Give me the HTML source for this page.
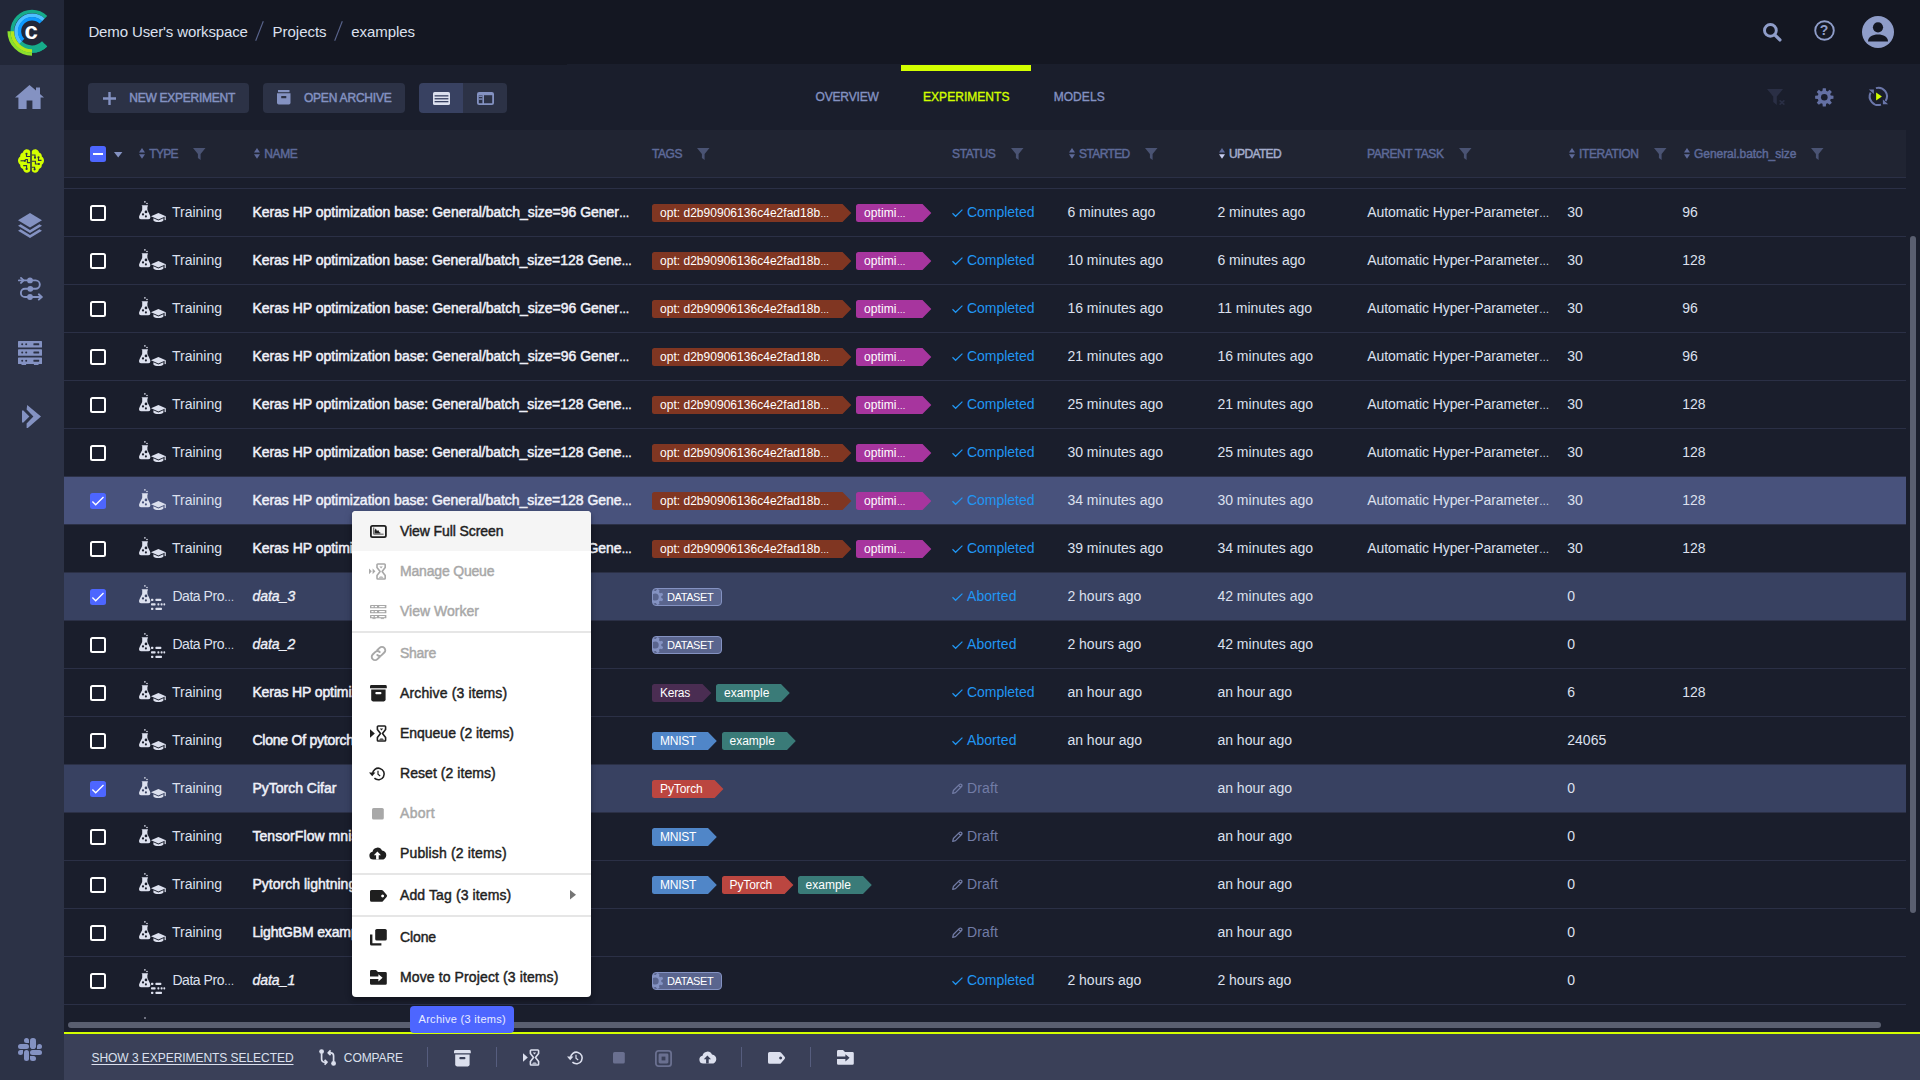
<!DOCTYPE html>
<html lang="en"><head><meta charset="utf-8"><title>ClearML - examples</title><style>
*{box-sizing:border-box;margin:0;padding:0}
html,body{width:1920px;height:1080px;overflow:hidden;background:#1a1e2c;font-family:"Liberation Sans",sans-serif}
.t{position:absolute;white-space:pre;line-height:20px;height:20px}
.b{position:absolute}
.i{position:absolute;overflow:visible}
.e{font-size:.74em;letter-spacing:0}
</style></head>
<body>
<div class="b " style="left:0px;top:0px;width:1920px;height:64px;background:#141722;"></div>
<div class="b " style="left:0px;top:64px;width:567px;height:1px;background:#141722;"></div>
<div class="b " style="left:0px;top:0px;width:64px;height:1080px;background:#2c3246;"></div>
<div class="b " style="left:0px;top:0px;width:64px;height:65px;background:#222738;"></div>
<svg class="i" style="left:0;top:0" width="64" height="64" viewBox="0 0 64 64"><path d="M45.97 45.17 A19.75 19.75 0 1 1 45.97 17.23" fill="none" stroke="#16ac8a" stroke-width="3.6"/><path d="M44.62 43.82 A17.85 17.85 0 0 1 19.16 43.60" fill="none" stroke="#16ac8a" stroke-width="7.3"/><path d="M20.62 42.58 A16.1 16.1 0 0 1 43.38 19.82" fill="none" stroke="#4dc0ff" stroke-width="3.9"/><path d="M23.16 40.04 A12.5 12.5 0 0 1 40.84 22.36" fill="none" stroke="#0d99ff" stroke-width="3.4"/><path d="M32.00 50.95 A19.75 19.75 0 0 1 12.25 31.20" fill="none" stroke="#b2e61c" stroke-width="3.6"/><path d="M32.00 54.20 A23 23 0 0 1 9.00 31.20" fill="none" stroke="#8be02c" stroke-width="3.1"/></svg>
<div class="t" style="left:24.6px;top:16.6px;font-size:24px;font-weight:700;color:#fff;line-height:28px;height:28px">c</div>
<svg class="i" style="left:15.2px;top:85px;" width="29" height="24" viewBox="0 0 29 24"><path fill="#8492c2" d="M14.5 0 L0 12.6 H3.4 V24 H11.6 V15.4 H17.4 V24 H25.6 V12.6 H29 L25 9.1 V2.4 H21 V5.6 Z"/></svg>
<svg class="i" style="left:17.6px;top:148.6px;" width="26" height="24" viewBox="0 0 26 24"><g fill="#d3ff00"><path d="M12.2 2.6 C11.6 .9 9.9 0 8.2 .3 C6.4 .6 5.2 1.9 5 3.6 C3.2 4 2 5.6 2.2 7.4 C.8 8.3 0 9.8 0 11.6 C0 13.4 .9 14.9 2.2 15.8 C2 17.8 3.2 19.5 5 20 C5.3 22.2 7 23.8 9 23.8 C10.6 23.8 11.8 22.9 12.2 21.6 Z"/>
<path d="M13.8 2.6 C14.4 .9 16.1 0 17.8 .3 C19.6 .6 20.8 1.9 21 3.6 C22.8 4 24 5.6 23.8 7.4 C25.2 8.3 26 9.8 26 11.6 C26 13.4 25.1 14.9 23.8 15.8 C24 17.8 22.8 19.5 21 20 C20.7 22.2 19 23.8 17 23.8 C15.4 23.8 14.2 22.9 13.8 21.6 Z"/></g>
<g fill="none" stroke="#2c3246" stroke-width="1.1"><path d="M12.2 7.5 H8.5 V5.2"/><path d="M2.5 11.8 H6.6"/><path d="M12.2 13.6 H9.4 V10.5 H7.2"/><path d="M8.6 19.6 V16.6 H5.2"/>
<path d="M13.8 6 H17 V8.4"/><path d="M23.5 11.4 H20.5 V8.6"/><path d="M13.8 12.2 H17.4 V15 H20.6"/><path d="M13.8 18.2 H16.6 V20"/></g>
<g fill="#2c3246"><circle cx="8.5" cy="4.8" r="1.1"/><circle cx="6.9" cy="11.8" r="1.1"/><circle cx="7" cy="10.5" r="0"/><circle cx="8.6" cy="19.9" r="1.1"/><circle cx="17" cy="8.7" r="1.1"/><circle cx="20.5" cy="8.3" r="1.1"/><circle cx="20.9" cy="15" r="1.1"/><circle cx="16.6" cy="20.3" r="1.1"/></g></svg>
<svg class="i" style="left:18.3px;top:212.8px;" width="24" height="25" viewBox="0 0 24 25"><g fill="#8492c2"><path d="M12 0 L24 7.2 L12 14.4 L0 7.2 Z"/><path d="M2.6 11.3 L0 12.8 L12 20 L24 12.8 L21.4 11.3 L12 17 Z"/><path d="M2.6 16.3 L0 17.8 L12 25 L24 17.8 L21.4 16.3 L12 22 Z"/></g></svg>
<svg class="i" style="left:17.5px;top:277.4px;" width="25" height="23" viewBox="0 0 25 23"><g fill="none" stroke="#8492c2" stroke-width="1.9" stroke-linecap="round" stroke-linejoin="round">
<path d="M.9 3.4 H17.6 a4.2 4.2 0 0 1 0 8.4 H7 a4.1 4.1 0 0 0 0 8.2 H23.5"/>
<path d="M3 .9 L5.6 3.4 L3 5.9"/><path d="M20.8 17.3 L23.7 20 L20.8 22.6"/></g>
<g fill="#8492c2"><circle cx="12" cy="3.4" r="2.9"/><circle cx="12.3" cy="11.8" r="2.9"/><circle cx="12" cy="20" r="2.9"/></g></svg>
<svg class="i" style="left:18px;top:340.8px;" width="24" height="24" viewBox="0 0 24 24"><g fill="#8492c2"><rect x="0" y="0" width="24" height="6.6" rx=".6"/><rect x="0" y="8.2" width="24" height="6.6" rx=".6"/><rect x="0" y="16.4" width="24" height="6.6" rx=".6"/><rect x="3.5" y="22.6" width="4.6" height="1.4"/><rect x="15.9" y="22.6" width="4.6" height="1.4"/></g><g fill="#2c3246"><circle cx="4.2" cy="3.3" r="1"/><circle cx="8.2" cy="3.3" r="1"/><rect x="15.4" y="2.3" width="5.8" height="2" rx=".4"/><circle cx="4.2" cy="11.5" r="1"/><circle cx="8.2" cy="11.5" r="1"/><rect x="15.4" y="10.5" width="5.8" height="2" rx=".4"/><circle cx="4.2" cy="19.7" r="1"/><circle cx="8.2" cy="19.7" r="1"/><rect x="15.4" y="18.7" width="5.8" height="2" rx=".4"/></g></svg>
<svg class="i" style="left:21.8px;top:405.4px;" width="19" height="23" viewBox="0 0 19 23"><g fill="#8492c2"><path d="M5.2 0 L19 11.4 L5.8 23 L4.6 23 L4.6 18.6 L11.4 11.4 L4.6 4.6 Z"/><path d="M0 5.6 L1.4 5.6 L7.4 11.4 L1.4 17.6 L0 17.6 Z"/></g></svg>
<div class="b" style="left:30px;top:1037.8px;width:5.6px;height:11.1px;background:#8492c2;border-radius:2.8px"></div>
<div class="b" style="left:24px;top:1037.8px;width:5.4px;height:5.2px;background:#8492c2;border-radius:2.6px 2.6px 0 2.6px"></div>
<div class="b" style="left:18px;top:1043.8999999999999px;width:11.4px;height:5px;background:#8492c2;border-radius:2.5px"></div>
<div class="b" style="left:18px;top:1050.0px;width:5.3px;height:5px;background:#8492c2;border-radius:2.5px 0 2.5px 2.5px"></div>
<div class="b" style="left:24px;top:1050.0px;width:5.4px;height:11.1px;background:#8492c2;border-radius:2.7px"></div>
<div class="b" style="left:30.2px;top:1055.8999999999999px;width:5.4px;height:5.2px;background:#8492c2;border-radius:0 2.6px 2.6px 2.6px"></div>
<div class="b" style="left:30.2px;top:1050.0px;width:11.7px;height:5px;background:#8492c2;border-radius:2.5px"></div>
<div class="b" style="left:36.5px;top:1043.8999999999999px;width:5.4px;height:5px;background:#8492c2;border-radius:2.5px 2.5px 2.5px 0"></div>
<div class="t " style="left:88.4px;top:21.5px;font-size:15px;color:#dce0ee;letter-spacing:-0.128px;">Demo User&#x27;s workspace</div>
<div class="t " style="left:272.6px;top:21.5px;font-size:15px;color:#dce0ee;letter-spacing:-0.023px;">Projects</div>
<div class="t " style="left:351.3px;top:21.5px;font-size:15px;color:#dce0ee;letter-spacing:-0.062px;">examples</div>
<svg class="i" style="left:255px;top:21px;" width="9" height="20" viewBox="0 0 9 20"><path d="M8.3 .3 L.7 19.7" stroke="#5a658e" stroke-width="1.1"/></svg>
<svg class="i" style="left:334px;top:21px;" width="9" height="20" viewBox="0 0 9 20"><path d="M8.3 .3 L.7 19.7" stroke="#5a658e" stroke-width="1.1"/></svg>
<svg class="i" style="left:1762.6px;top:22.6px;" width="19" height="19" viewBox="0 0 19 19"><circle cx="7.4" cy="7.4" r="5.9" fill="none" stroke="#8f9dc9" stroke-width="2.9"/><path d="M11.8 11.8 L16.9 16.9" stroke="#8f9dc9" stroke-width="3.3" stroke-linecap="round"/></svg>
<svg class="i" style="left:1813.5px;top:19.7px;" width="21" height="21" viewBox="0 0 21 21"><circle cx="10.5" cy="10.5" r="9.3" fill="none" stroke="#8f9dc9" stroke-width="1.9"/></svg>
<div class="t" style="left:1819.7px;top:20.3px;font-size:14px;font-weight:700;color:#8f9dc9">?</div>
<svg class="i" style="left:1862px;top:16px;" width="32" height="32" viewBox="0 0 32 32"><circle cx="16" cy="16" r="16" fill="#8f9dc9"/><circle cx="16" cy="11.3" r="5.1" fill="#141722"/><path d="M6 25.4 C6 20.6 10.5 18.4 16 18.4 C21.5 18.4 26 20.6 26 25.4 Z" fill="#141722"/></svg>
<div class="b " style="left:88px;top:83px;width:161px;height:30px;background:#2c3246;border-radius:4px"></div>
<svg class="i" style="left:102.5px;top:91.5px;" width="13" height="13" viewBox="0 0 13 13"><path d="M5.3 0 H7.7 V5.3 H13 V7.7 H7.7 V13 H5.3 V7.7 H0 V5.3 H5.3 Z" fill="#8492c2"/></svg>
<div class="t " style="left:129.3px;top:88.1px;font-size:12px;color:#8492c2;letter-spacing:-0.253px;-webkit-text-stroke:0.45px #8492c2;">NEW EXPERIMENT</div>
<div class="b " style="left:263px;top:83px;width:142px;height:30px;background:#2c3246;border-radius:4px"></div>
<svg class="i" style="left:277px;top:90.4px;" width="13.5" height="14.5" viewBox="0 0 13.5 14.5"><path d="M1 0 H12.5 V2.2 H1 Z" fill="#8492c2"/><path d="M0 3.3 H13.5 V12.8 a1.7 1.7 0 0 1 -1.7 1.7 H1.7 a1.7 1.7 0 0 1 -1.7 -1.7 Z" fill="#8492c2"/><rect x="4.2" y="6" width="5.1" height="2.2" rx=".5" fill="#2c3246"/></svg>
<div class="t " style="left:303.9px;top:88.1px;font-size:12px;color:#8492c2;letter-spacing:-0.194px;-webkit-text-stroke:0.45px #8492c2;">OPEN ARCHIVE</div>
<div class="b " style="left:419px;top:83px;width:44px;height:30px;background:#384161;border-radius:4px 0 0 4px"></div>
<div class="b " style="left:463px;top:83px;width:44px;height:30px;background:#2c3246;border-radius:0 4px 4px 0"></div>
<svg class="i" style="left:433px;top:91.8px;" width="17" height="13" viewBox="0 0 17 13"><rect x="0" y="0" width="17" height="13" rx="1.6" fill="#dce0ee"/><g fill="#384161"><rect x="1.6" y="3.2" width="13.8" height="1.3"/><rect x="1.6" y="6.1" width="13.8" height="1.3"/><rect x="1.6" y="9" width="13.8" height="1.3"/></g></svg>
<svg class="i" style="left:477px;top:91.8px;" width="17" height="13" viewBox="0 0 17 13"><rect x=".9" y=".9" width="15.2" height="11.2" rx="1.2" fill="none" stroke="#8492c2" stroke-width="1.8"/><rect x="5.4" y="1" width="1.6" height="11" fill="#8492c2"/><rect x="1" y="3" width="15" height="1.4" fill="#8492c2" opacity="0"/><rect x="1.8" y="3.6" width="3.6" height="1.3" fill="#8492c2"/><rect x="1.8" y="6.4" width="3.6" height="1.3" fill="#8492c2"/><rect x="1" y="1" width="15" height="2.2" fill="#8492c2"/></svg>
<div class="b " style="left:901px;top:65px;width:130px;height:6px;background:#d3ff00;"></div>
<div class="t " style="left:815.5px;top:86.6px;font-size:12px;color:#8492c2;letter-spacing:-0.158px;-webkit-text-stroke:0.35px #8492c2;">OVERVIEW</div>
<div class="t " style="left:923px;top:86.6px;font-size:12px;color:#d3ff00;letter-spacing:0.044px;-webkit-text-stroke:0.35px #d3ff00;">EXPERIMENTS</div>
<div class="t " style="left:1053.7px;top:86.6px;font-size:12px;color:#8492c2;letter-spacing:0.053px;-webkit-text-stroke:0.35px #8492c2;">MODELS</div>
<svg class="i" style="left:1767px;top:89px;" width="18" height="16" viewBox="0 0 18 16"><path d="M0 0 H16 L9.8 7.6 V16 L6.2 13 V7.6 Z" fill="#2a2f45"/><path d="M12.6 11.4 L17.4 15.6 M17.4 11.4 L12.6 15.6" stroke="#2a2f45" stroke-width="1.5"/></svg>
<svg class="i" style="left:1814.7px;top:88px;" width="18.6" height="18.6" viewBox="0 0 18.6 18.6"><path d="M18.47 7.77 L18.47 10.83 L15.75 11.12 L15.15 12.57 L16.87 14.71 L14.71 16.87 L12.57 15.15 L11.12 15.75 L10.83 18.47 L7.77 18.47 L7.48 15.75 L6.03 15.15 L3.89 16.87 L1.73 14.71 L3.45 12.57 L2.85 11.12 L0.13 10.83 L0.13 7.77 L2.85 7.48 L3.45 6.03 L1.73 3.89 L3.89 1.73 L6.03 3.45 L7.48 2.85 L7.77 0.13 L10.83 0.13 L11.12 2.85 L12.57 3.45 L14.71 1.73 L16.87 3.89 L15.15 6.03 L15.75 7.48 Z" fill="#6470a3"/><circle cx="9.3" cy="9.3" r="3.3" fill="#1a1e2c"/></svg>
<svg class="i" style="left:1868px;top:86.1px;" width="21" height="21" viewBox="0 0 21 21"><g fill="none" stroke="#6b77aa" stroke-width="2"><path d="M7.93 2.13 A8.6 8.6 0 0 1 17.59 14.96"/><path d="M12.96 18.58 A8.6 8.6 0 0 1 2.57 6.63"/></g>
<path d="M14.9 13.4 V18.3 H20.1 Z" fill="#6b77aa"/><path d="M.8 3.5 H5.9 V8 Z" fill="#6b77aa"/>
<path d="M8.1 6.4 L13.9 10.4 L8.1 14.4 Z" fill="#d3ff00"/></svg>
<div class="b " style="left:64px;top:130px;width:1842px;height:48px;background:#202432;"></div>
<div class="b " style="left:64px;top:177px;width:1842px;height:1px;background:#2b3046;"></div>
<div class="b" style="left:90px;top:146px;width:16px;height:16px;background:#4d66ff;border-radius:2.5px"></div>
<div class="b " style="left:93px;top:153.2px;width:10px;height:1.6px;background:#fff;"></div>
<svg class="i" style="left:113.7px;top:152.1px;" width="8.4" height="5.6" viewBox="0 0 8.4 5.6"><path d="M0 0 H8.4 L4.2 5.6 Z" fill="#8492c2"/></svg>
<svg class="i" style="left:138.70000000000002px;top:148.2px;" width="6" height="10.8" viewBox="0 0 6 10.8"><path d="M0 4.6 L3 0 L6 4.6 Z" fill="#5e6a99"/><path d="M0 6.2 L3 10.8 L6 6.2 Z" fill="#5e6a99"/></svg>
<div class="t " style="left:149.20000000000002px;top:143.6px;font-size:12px;color:#5e6a99;letter-spacing:-0.636px;-webkit-text-stroke:0.45px #5e6a99;">TYPE</div>
<svg class="i" style="left:192.5px;top:147.8px;" width="12.5" height="12" viewBox="0 0 12.5 12"><path d="M0 0 H12.5 L7.6 6 V12 L4.9 10 V6 Z" fill="#4a5373"/></svg>
<svg class="i" style="left:253.70000000000002px;top:148.2px;" width="6" height="10.8" viewBox="0 0 6 10.8"><path d="M0 4.6 L3 0 L6 4.6 Z" fill="#5e6a99"/><path d="M0 6.2 L3 10.8 L6 6.2 Z" fill="#5e6a99"/></svg>
<div class="t " style="left:264.2px;top:143.6px;font-size:12px;color:#5e6a99;letter-spacing:-0.343px;-webkit-text-stroke:0.45px #5e6a99;">NAME</div>
<div class="t " style="left:652px;top:143.6px;font-size:12px;color:#5e6a99;letter-spacing:-0.446px;-webkit-text-stroke:0.45px #5e6a99;">TAGS</div>
<svg class="i" style="left:697px;top:147.8px;" width="12.5" height="12" viewBox="0 0 12.5 12"><path d="M0 0 H12.5 L7.6 6 V12 L4.9 10 V6 Z" fill="#4a5373"/></svg>
<div class="t " style="left:952px;top:143.6px;font-size:12px;color:#5e6a99;letter-spacing:-0.343px;-webkit-text-stroke:0.45px #5e6a99;">STATUS</div>
<svg class="i" style="left:1011px;top:147.8px;" width="12.5" height="12" viewBox="0 0 12.5 12"><path d="M0 0 H12.5 L7.6 6 V12 L4.9 10 V6 Z" fill="#4a5373"/></svg>
<svg class="i" style="left:1068.6px;top:148.2px;" width="6" height="10.8" viewBox="0 0 6 10.8"><path d="M0 4.6 L3 0 L6 4.6 Z" fill="#5e6a99"/><path d="M0 6.2 L3 10.8 L6 6.2 Z" fill="#5e6a99"/></svg>
<div class="t " style="left:1079.1px;top:143.6px;font-size:12px;color:#5e6a99;letter-spacing:-0.628px;-webkit-text-stroke:0.45px #5e6a99;">STARTED</div>
<svg class="i" style="left:1144.5px;top:147.8px;" width="12.5" height="12" viewBox="0 0 12.5 12"><path d="M0 0 H12.5 L7.6 6 V12 L4.9 10 V6 Z" fill="#4a5373"/></svg>
<svg class="i" style="left:1218.6px;top:148.2px;" width="6" height="10.8" viewBox="0 0 6 10.8"><path d="M0 4.6 L3 0 L6 4.6 Z" fill="#5e6a99"/><path d="M0 6.2 L3 10.8 L6 6.2 Z" fill="#c8cef0"/></svg>
<div class="t " style="left:1229.1px;top:143.6px;font-size:12px;color:#a4adcd;letter-spacing:-0.650px;-webkit-text-stroke:0.45px #a4adcd;">UPDATED</div>
<div class="t " style="left:1367px;top:143.6px;font-size:12px;color:#5e6a99;letter-spacing:-0.422px;-webkit-text-stroke:0.45px #5e6a99;">PARENT TASK</div>
<svg class="i" style="left:1458.5px;top:147.8px;" width="12.5" height="12" viewBox="0 0 12.5 12"><path d="M0 0 H12.5 L7.6 6 V12 L4.9 10 V6 Z" fill="#4a5373"/></svg>
<svg class="i" style="left:1568.6px;top:148.2px;" width="6" height="10.8" viewBox="0 0 6 10.8"><path d="M0 4.6 L3 0 L6 4.6 Z" fill="#5e6a99"/><path d="M0 6.2 L3 10.8 L6 6.2 Z" fill="#5e6a99"/></svg>
<div class="t " style="left:1579.1px;top:143.6px;font-size:12px;color:#5e6a99;letter-spacing:-0.412px;-webkit-text-stroke:0.45px #5e6a99;">ITERATION</div>
<svg class="i" style="left:1653.5px;top:147.8px;" width="12.5" height="12" viewBox="0 0 12.5 12"><path d="M0 0 H12.5 L7.6 6 V12 L4.9 10 V6 Z" fill="#4a5373"/></svg>
<svg class="i" style="left:1683.6px;top:148.2px;" width="6" height="10.8" viewBox="0 0 6 10.8"><path d="M0 4.6 L3 0 L6 4.6 Z" fill="#5e6a99"/><path d="M0 6.2 L3 10.8 L6 6.2 Z" fill="#5e6a99"/></svg>
<div class="t " style="left:1694.1px;top:143.6px;font-size:12px;color:#5e6a99;letter-spacing:-0.066px;-webkit-text-stroke:0.45px #5e6a99;">General.batch_size</div>
<svg class="i" style="left:1810.5px;top:147.8px;" width="12.5" height="12" viewBox="0 0 12.5 12"><path d="M0 0 H12.5 L7.6 6 V12 L4.9 10 V6 Z" fill="#4a5373"/></svg>
<div class="b " style="left:64px;top:188px;width:1842px;height:1px;background:#2b3046;"></div>
<div class="b " style="left:64px;top:236px;width:1842px;height:1px;background:#2b3046;"></div>
<div class="b " style="left:64px;top:284px;width:1842px;height:1px;background:#2b3046;"></div>
<div class="b " style="left:64px;top:332px;width:1842px;height:1px;background:#2b3046;"></div>
<div class="b " style="left:64px;top:380px;width:1842px;height:1px;background:#2b3046;"></div>
<div class="b " style="left:64px;top:428px;width:1842px;height:1px;background:#2b3046;"></div>
<div class="b " style="left:64px;top:476px;width:1842px;height:1px;background:#2b3046;"></div>
<div class="b " style="left:64px;top:524px;width:1842px;height:1px;background:#2b3046;"></div>
<div class="b " style="left:64px;top:572px;width:1842px;height:1px;background:#2b3046;"></div>
<div class="b " style="left:64px;top:620px;width:1842px;height:1px;background:#2b3046;"></div>
<div class="b " style="left:64px;top:668px;width:1842px;height:1px;background:#2b3046;"></div>
<div class="b " style="left:64px;top:716px;width:1842px;height:1px;background:#2b3046;"></div>
<div class="b " style="left:64px;top:764px;width:1842px;height:1px;background:#2b3046;"></div>
<div class="b " style="left:64px;top:812px;width:1842px;height:1px;background:#2b3046;"></div>
<div class="b " style="left:64px;top:860px;width:1842px;height:1px;background:#2b3046;"></div>
<div class="b " style="left:64px;top:908px;width:1842px;height:1px;background:#2b3046;"></div>
<div class="b " style="left:64px;top:956px;width:1842px;height:1px;background:#2b3046;"></div>
<div class="b " style="left:64px;top:1004px;width:1842px;height:1px;background:#2b3046;"></div>
<div class="b" style="left:90px;top:205px;width:16px;height:16px;border:2px solid #fff;border-radius:2.5px"></div>
<svg class="i" style="left:138.8px;top:200.8px;" width="11.4" height="18.4" viewBox="0 0 11.4 18.4"><path d="M2.7 4.2 H8.9 V5.5 H8.4 V8.8 C8.4 10 11.4 14 11.4 16.3 a2 2 0 0 1 -2 2 H2 a2 2 0 0 1 -2 -2 C0 14 3.2 9.8 3.2 8.4 V4.7 H2.7 Z" fill="#dce0ee"/>
<circle cx="7" cy="10.9" r="1.35" fill="#1a1e2c"/><circle cx="4" cy="13.4" r="1.15" fill="#1a1e2c"/><circle cx="6.9" cy="15.4" r="1.05" fill="#1a1e2c"/>
<circle cx="5.9" cy=".9" r=".8" fill="#dce0ee"/><circle cx="8" cy="2.5" r=".8" fill="#dce0ee"/></svg>
<svg class="i" style="left:150.8px;top:212.5px;" width="14.8" height="9.8" viewBox="0 0 14.8 9.8"><path d="M7.4 0 L14.8 3.3 L7.4 6.6 L0 3.3 Z" fill="#dce0ee"/><path d="M2.4 5.3 V7.4 C4.2 9.4 10.6 9.4 12.4 7.4 V5.3 L7.4 7.6 Z" fill="#dce0ee"/><rect x="13.6" y="3.3" width="1.2" height="3.8" fill="#dce0ee"/></svg>
<div class="t " style="left:172px;top:201.8px;font-size:14px;color:#dce0ee;letter-spacing:-0.008px;">Training</div>
<div class="t " style="left:252.4px;top:201.8px;font-size:14px;color:#eff1f9;letter-spacing:-0.015px;-webkit-text-stroke:0.5px #eff1f9;">Keras HP optimization base: General/batch_size=96 Gener<span class="e">…</span></div>
<svg class="i" style="left:652px;top:204px;" width="199.5" height="18" viewBox="0 0 199.5 18"><path d="M2.5 0 H190.5 L199.3 9 L190.5 18 H2.5 a2.5 2.5 0 0 1 -2.5 -2.5 V2.5 a2.5 2.5 0 0 1 2.5 -2.5 Z" fill="#803622"/></svg>
<div class="t " style="left:660px;top:203.3px;font-size:12px;color:#fff;letter-spacing:0.025px;">opt: d2b90906136c4e2fad18b<span class="e">…</span></div>
<svg class="i" style="left:856.0px;top:204px;" width="75.5" height="18" viewBox="0 0 75.5 18"><path d="M2.5 0 H66.5 L75.3 9 L66.5 18 H2.5 a2.5 2.5 0 0 1 -2.5 -2.5 V2.5 a2.5 2.5 0 0 1 2.5 -2.5 Z" fill="#a7359e"/></svg>
<div class="t " style="left:864.0px;top:203.3px;font-size:12px;color:#fff;letter-spacing:0.102px;">optimi<span class="e">…</span></div>
<svg class="i" style="left:951.6px;top:208.8px;" width="11" height="8" viewBox="0 0 11 8"><path d="M.5 4.3 L3.6 7.3 L10.4 .6" fill="none" stroke="#2196f3" stroke-width="1.2"/></svg>
<div class="t " style="left:967px;top:201.8px;font-size:14px;color:#2196f3;letter-spacing:-0.023px;">Completed</div>
<div class="t " style="left:1067.4px;top:201.8px;font-size:14px;color:#dce0ee;">6 minutes ago</div>
<div class="t " style="left:1217.4px;top:201.8px;font-size:14px;color:#dce0ee;">2 minutes ago</div>
<div class="t " style="left:1367.3px;top:201.8px;font-size:14px;color:#dce0ee;letter-spacing:-0.074px;">Automatic Hyper-Parameter<span class="e">…</span></div>
<div class="t " style="left:1567.3px;top:201.8px;font-size:14px;color:#dce0ee;">30</div>
<div class="t " style="left:1682.3px;top:201.8px;font-size:14px;color:#dce0ee;">96</div>
<div class="b" style="left:90px;top:253px;width:16px;height:16px;border:2px solid #fff;border-radius:2.5px"></div>
<svg class="i" style="left:138.8px;top:248.8px;" width="11.4" height="18.4" viewBox="0 0 11.4 18.4"><path d="M2.7 4.2 H8.9 V5.5 H8.4 V8.8 C8.4 10 11.4 14 11.4 16.3 a2 2 0 0 1 -2 2 H2 a2 2 0 0 1 -2 -2 C0 14 3.2 9.8 3.2 8.4 V4.7 H2.7 Z" fill="#dce0ee"/>
<circle cx="7" cy="10.9" r="1.35" fill="#1a1e2c"/><circle cx="4" cy="13.4" r="1.15" fill="#1a1e2c"/><circle cx="6.9" cy="15.4" r="1.05" fill="#1a1e2c"/>
<circle cx="5.9" cy=".9" r=".8" fill="#dce0ee"/><circle cx="8" cy="2.5" r=".8" fill="#dce0ee"/></svg>
<svg class="i" style="left:150.8px;top:260.5px;" width="14.8" height="9.8" viewBox="0 0 14.8 9.8"><path d="M7.4 0 L14.8 3.3 L7.4 6.6 L0 3.3 Z" fill="#dce0ee"/><path d="M2.4 5.3 V7.4 C4.2 9.4 10.6 9.4 12.4 7.4 V5.3 L7.4 7.6 Z" fill="#dce0ee"/><rect x="13.6" y="3.3" width="1.2" height="3.8" fill="#dce0ee"/></svg>
<div class="t " style="left:172px;top:249.8px;font-size:14px;color:#dce0ee;letter-spacing:-0.008px;">Training</div>
<div class="t " style="left:252.4px;top:249.8px;font-size:14px;color:#eff1f9;letter-spacing:-0.026px;-webkit-text-stroke:0.5px #eff1f9;">Keras HP optimization base: General/batch_size=128 Gene<span class="e">…</span></div>
<svg class="i" style="left:652px;top:252px;" width="199.5" height="18" viewBox="0 0 199.5 18"><path d="M2.5 0 H190.5 L199.3 9 L190.5 18 H2.5 a2.5 2.5 0 0 1 -2.5 -2.5 V2.5 a2.5 2.5 0 0 1 2.5 -2.5 Z" fill="#803622"/></svg>
<div class="t " style="left:660px;top:251.3px;font-size:12px;color:#fff;letter-spacing:0.025px;">opt: d2b90906136c4e2fad18b<span class="e">…</span></div>
<svg class="i" style="left:856.0px;top:252px;" width="75.5" height="18" viewBox="0 0 75.5 18"><path d="M2.5 0 H66.5 L75.3 9 L66.5 18 H2.5 a2.5 2.5 0 0 1 -2.5 -2.5 V2.5 a2.5 2.5 0 0 1 2.5 -2.5 Z" fill="#a7359e"/></svg>
<div class="t " style="left:864.0px;top:251.3px;font-size:12px;color:#fff;letter-spacing:0.102px;">optimi<span class="e">…</span></div>
<svg class="i" style="left:951.6px;top:256.8px;" width="11" height="8" viewBox="0 0 11 8"><path d="M.5 4.3 L3.6 7.3 L10.4 .6" fill="none" stroke="#2196f3" stroke-width="1.2"/></svg>
<div class="t " style="left:967px;top:249.8px;font-size:14px;color:#2196f3;letter-spacing:-0.023px;">Completed</div>
<div class="t " style="left:1067.4px;top:249.8px;font-size:14px;color:#dce0ee;">10 minutes ago</div>
<div class="t " style="left:1217.4px;top:249.8px;font-size:14px;color:#dce0ee;">6 minutes ago</div>
<div class="t " style="left:1367.3px;top:249.8px;font-size:14px;color:#dce0ee;letter-spacing:-0.074px;">Automatic Hyper-Parameter<span class="e">…</span></div>
<div class="t " style="left:1567.3px;top:249.8px;font-size:14px;color:#dce0ee;">30</div>
<div class="t " style="left:1682.3px;top:249.8px;font-size:14px;color:#dce0ee;">128</div>
<div class="b" style="left:90px;top:301px;width:16px;height:16px;border:2px solid #fff;border-radius:2.5px"></div>
<svg class="i" style="left:138.8px;top:296.8px;" width="11.4" height="18.4" viewBox="0 0 11.4 18.4"><path d="M2.7 4.2 H8.9 V5.5 H8.4 V8.8 C8.4 10 11.4 14 11.4 16.3 a2 2 0 0 1 -2 2 H2 a2 2 0 0 1 -2 -2 C0 14 3.2 9.8 3.2 8.4 V4.7 H2.7 Z" fill="#dce0ee"/>
<circle cx="7" cy="10.9" r="1.35" fill="#1a1e2c"/><circle cx="4" cy="13.4" r="1.15" fill="#1a1e2c"/><circle cx="6.9" cy="15.4" r="1.05" fill="#1a1e2c"/>
<circle cx="5.9" cy=".9" r=".8" fill="#dce0ee"/><circle cx="8" cy="2.5" r=".8" fill="#dce0ee"/></svg>
<svg class="i" style="left:150.8px;top:308.5px;" width="14.8" height="9.8" viewBox="0 0 14.8 9.8"><path d="M7.4 0 L14.8 3.3 L7.4 6.6 L0 3.3 Z" fill="#dce0ee"/><path d="M2.4 5.3 V7.4 C4.2 9.4 10.6 9.4 12.4 7.4 V5.3 L7.4 7.6 Z" fill="#dce0ee"/><rect x="13.6" y="3.3" width="1.2" height="3.8" fill="#dce0ee"/></svg>
<div class="t " style="left:172px;top:297.8px;font-size:14px;color:#dce0ee;letter-spacing:-0.008px;">Training</div>
<div class="t " style="left:252.4px;top:297.8px;font-size:14px;color:#eff1f9;letter-spacing:-0.015px;-webkit-text-stroke:0.5px #eff1f9;">Keras HP optimization base: General/batch_size=96 Gener<span class="e">…</span></div>
<svg class="i" style="left:652px;top:300px;" width="199.5" height="18" viewBox="0 0 199.5 18"><path d="M2.5 0 H190.5 L199.3 9 L190.5 18 H2.5 a2.5 2.5 0 0 1 -2.5 -2.5 V2.5 a2.5 2.5 0 0 1 2.5 -2.5 Z" fill="#803622"/></svg>
<div class="t " style="left:660px;top:299.3px;font-size:12px;color:#fff;letter-spacing:0.025px;">opt: d2b90906136c4e2fad18b<span class="e">…</span></div>
<svg class="i" style="left:856.0px;top:300px;" width="75.5" height="18" viewBox="0 0 75.5 18"><path d="M2.5 0 H66.5 L75.3 9 L66.5 18 H2.5 a2.5 2.5 0 0 1 -2.5 -2.5 V2.5 a2.5 2.5 0 0 1 2.5 -2.5 Z" fill="#a7359e"/></svg>
<div class="t " style="left:864.0px;top:299.3px;font-size:12px;color:#fff;letter-spacing:0.102px;">optimi<span class="e">…</span></div>
<svg class="i" style="left:951.6px;top:304.8px;" width="11" height="8" viewBox="0 0 11 8"><path d="M.5 4.3 L3.6 7.3 L10.4 .6" fill="none" stroke="#2196f3" stroke-width="1.2"/></svg>
<div class="t " style="left:967px;top:297.8px;font-size:14px;color:#2196f3;letter-spacing:-0.023px;">Completed</div>
<div class="t " style="left:1067.4px;top:297.8px;font-size:14px;color:#dce0ee;">16 minutes ago</div>
<div class="t " style="left:1217.4px;top:297.8px;font-size:14px;color:#dce0ee;">11 minutes ago</div>
<div class="t " style="left:1367.3px;top:297.8px;font-size:14px;color:#dce0ee;letter-spacing:-0.074px;">Automatic Hyper-Parameter<span class="e">…</span></div>
<div class="t " style="left:1567.3px;top:297.8px;font-size:14px;color:#dce0ee;">30</div>
<div class="t " style="left:1682.3px;top:297.8px;font-size:14px;color:#dce0ee;">96</div>
<div class="b" style="left:90px;top:349px;width:16px;height:16px;border:2px solid #fff;border-radius:2.5px"></div>
<svg class="i" style="left:138.8px;top:344.8px;" width="11.4" height="18.4" viewBox="0 0 11.4 18.4"><path d="M2.7 4.2 H8.9 V5.5 H8.4 V8.8 C8.4 10 11.4 14 11.4 16.3 a2 2 0 0 1 -2 2 H2 a2 2 0 0 1 -2 -2 C0 14 3.2 9.8 3.2 8.4 V4.7 H2.7 Z" fill="#dce0ee"/>
<circle cx="7" cy="10.9" r="1.35" fill="#1a1e2c"/><circle cx="4" cy="13.4" r="1.15" fill="#1a1e2c"/><circle cx="6.9" cy="15.4" r="1.05" fill="#1a1e2c"/>
<circle cx="5.9" cy=".9" r=".8" fill="#dce0ee"/><circle cx="8" cy="2.5" r=".8" fill="#dce0ee"/></svg>
<svg class="i" style="left:150.8px;top:356.5px;" width="14.8" height="9.8" viewBox="0 0 14.8 9.8"><path d="M7.4 0 L14.8 3.3 L7.4 6.6 L0 3.3 Z" fill="#dce0ee"/><path d="M2.4 5.3 V7.4 C4.2 9.4 10.6 9.4 12.4 7.4 V5.3 L7.4 7.6 Z" fill="#dce0ee"/><rect x="13.6" y="3.3" width="1.2" height="3.8" fill="#dce0ee"/></svg>
<div class="t " style="left:172px;top:345.8px;font-size:14px;color:#dce0ee;letter-spacing:-0.008px;">Training</div>
<div class="t " style="left:252.4px;top:345.8px;font-size:14px;color:#eff1f9;letter-spacing:-0.015px;-webkit-text-stroke:0.5px #eff1f9;">Keras HP optimization base: General/batch_size=96 Gener<span class="e">…</span></div>
<svg class="i" style="left:652px;top:348px;" width="199.5" height="18" viewBox="0 0 199.5 18"><path d="M2.5 0 H190.5 L199.3 9 L190.5 18 H2.5 a2.5 2.5 0 0 1 -2.5 -2.5 V2.5 a2.5 2.5 0 0 1 2.5 -2.5 Z" fill="#803622"/></svg>
<div class="t " style="left:660px;top:347.3px;font-size:12px;color:#fff;letter-spacing:0.025px;">opt: d2b90906136c4e2fad18b<span class="e">…</span></div>
<svg class="i" style="left:856.0px;top:348px;" width="75.5" height="18" viewBox="0 0 75.5 18"><path d="M2.5 0 H66.5 L75.3 9 L66.5 18 H2.5 a2.5 2.5 0 0 1 -2.5 -2.5 V2.5 a2.5 2.5 0 0 1 2.5 -2.5 Z" fill="#a7359e"/></svg>
<div class="t " style="left:864.0px;top:347.3px;font-size:12px;color:#fff;letter-spacing:0.102px;">optimi<span class="e">…</span></div>
<svg class="i" style="left:951.6px;top:352.8px;" width="11" height="8" viewBox="0 0 11 8"><path d="M.5 4.3 L3.6 7.3 L10.4 .6" fill="none" stroke="#2196f3" stroke-width="1.2"/></svg>
<div class="t " style="left:967px;top:345.8px;font-size:14px;color:#2196f3;letter-spacing:-0.023px;">Completed</div>
<div class="t " style="left:1067.4px;top:345.8px;font-size:14px;color:#dce0ee;">21 minutes ago</div>
<div class="t " style="left:1217.4px;top:345.8px;font-size:14px;color:#dce0ee;">16 minutes ago</div>
<div class="t " style="left:1367.3px;top:345.8px;font-size:14px;color:#dce0ee;letter-spacing:-0.074px;">Automatic Hyper-Parameter<span class="e">…</span></div>
<div class="t " style="left:1567.3px;top:345.8px;font-size:14px;color:#dce0ee;">30</div>
<div class="t " style="left:1682.3px;top:345.8px;font-size:14px;color:#dce0ee;">96</div>
<div class="b" style="left:90px;top:397px;width:16px;height:16px;border:2px solid #fff;border-radius:2.5px"></div>
<svg class="i" style="left:138.8px;top:392.8px;" width="11.4" height="18.4" viewBox="0 0 11.4 18.4"><path d="M2.7 4.2 H8.9 V5.5 H8.4 V8.8 C8.4 10 11.4 14 11.4 16.3 a2 2 0 0 1 -2 2 H2 a2 2 0 0 1 -2 -2 C0 14 3.2 9.8 3.2 8.4 V4.7 H2.7 Z" fill="#dce0ee"/>
<circle cx="7" cy="10.9" r="1.35" fill="#1a1e2c"/><circle cx="4" cy="13.4" r="1.15" fill="#1a1e2c"/><circle cx="6.9" cy="15.4" r="1.05" fill="#1a1e2c"/>
<circle cx="5.9" cy=".9" r=".8" fill="#dce0ee"/><circle cx="8" cy="2.5" r=".8" fill="#dce0ee"/></svg>
<svg class="i" style="left:150.8px;top:404.5px;" width="14.8" height="9.8" viewBox="0 0 14.8 9.8"><path d="M7.4 0 L14.8 3.3 L7.4 6.6 L0 3.3 Z" fill="#dce0ee"/><path d="M2.4 5.3 V7.4 C4.2 9.4 10.6 9.4 12.4 7.4 V5.3 L7.4 7.6 Z" fill="#dce0ee"/><rect x="13.6" y="3.3" width="1.2" height="3.8" fill="#dce0ee"/></svg>
<div class="t " style="left:172px;top:393.8px;font-size:14px;color:#dce0ee;letter-spacing:-0.008px;">Training</div>
<div class="t " style="left:252.4px;top:393.8px;font-size:14px;color:#eff1f9;letter-spacing:-0.026px;-webkit-text-stroke:0.5px #eff1f9;">Keras HP optimization base: General/batch_size=128 Gene<span class="e">…</span></div>
<svg class="i" style="left:652px;top:396px;" width="199.5" height="18" viewBox="0 0 199.5 18"><path d="M2.5 0 H190.5 L199.3 9 L190.5 18 H2.5 a2.5 2.5 0 0 1 -2.5 -2.5 V2.5 a2.5 2.5 0 0 1 2.5 -2.5 Z" fill="#803622"/></svg>
<div class="t " style="left:660px;top:395.3px;font-size:12px;color:#fff;letter-spacing:0.025px;">opt: d2b90906136c4e2fad18b<span class="e">…</span></div>
<svg class="i" style="left:856.0px;top:396px;" width="75.5" height="18" viewBox="0 0 75.5 18"><path d="M2.5 0 H66.5 L75.3 9 L66.5 18 H2.5 a2.5 2.5 0 0 1 -2.5 -2.5 V2.5 a2.5 2.5 0 0 1 2.5 -2.5 Z" fill="#a7359e"/></svg>
<div class="t " style="left:864.0px;top:395.3px;font-size:12px;color:#fff;letter-spacing:0.102px;">optimi<span class="e">…</span></div>
<svg class="i" style="left:951.6px;top:400.8px;" width="11" height="8" viewBox="0 0 11 8"><path d="M.5 4.3 L3.6 7.3 L10.4 .6" fill="none" stroke="#2196f3" stroke-width="1.2"/></svg>
<div class="t " style="left:967px;top:393.8px;font-size:14px;color:#2196f3;letter-spacing:-0.023px;">Completed</div>
<div class="t " style="left:1067.4px;top:393.8px;font-size:14px;color:#dce0ee;">25 minutes ago</div>
<div class="t " style="left:1217.4px;top:393.8px;font-size:14px;color:#dce0ee;">21 minutes ago</div>
<div class="t " style="left:1367.3px;top:393.8px;font-size:14px;color:#dce0ee;letter-spacing:-0.074px;">Automatic Hyper-Parameter<span class="e">…</span></div>
<div class="t " style="left:1567.3px;top:393.8px;font-size:14px;color:#dce0ee;">30</div>
<div class="t " style="left:1682.3px;top:393.8px;font-size:14px;color:#dce0ee;">128</div>
<div class="b" style="left:90px;top:445px;width:16px;height:16px;border:2px solid #fff;border-radius:2.5px"></div>
<svg class="i" style="left:138.8px;top:440.8px;" width="11.4" height="18.4" viewBox="0 0 11.4 18.4"><path d="M2.7 4.2 H8.9 V5.5 H8.4 V8.8 C8.4 10 11.4 14 11.4 16.3 a2 2 0 0 1 -2 2 H2 a2 2 0 0 1 -2 -2 C0 14 3.2 9.8 3.2 8.4 V4.7 H2.7 Z" fill="#dce0ee"/>
<circle cx="7" cy="10.9" r="1.35" fill="#1a1e2c"/><circle cx="4" cy="13.4" r="1.15" fill="#1a1e2c"/><circle cx="6.9" cy="15.4" r="1.05" fill="#1a1e2c"/>
<circle cx="5.9" cy=".9" r=".8" fill="#dce0ee"/><circle cx="8" cy="2.5" r=".8" fill="#dce0ee"/></svg>
<svg class="i" style="left:150.8px;top:452.5px;" width="14.8" height="9.8" viewBox="0 0 14.8 9.8"><path d="M7.4 0 L14.8 3.3 L7.4 6.6 L0 3.3 Z" fill="#dce0ee"/><path d="M2.4 5.3 V7.4 C4.2 9.4 10.6 9.4 12.4 7.4 V5.3 L7.4 7.6 Z" fill="#dce0ee"/><rect x="13.6" y="3.3" width="1.2" height="3.8" fill="#dce0ee"/></svg>
<div class="t " style="left:172px;top:441.8px;font-size:14px;color:#dce0ee;letter-spacing:-0.008px;">Training</div>
<div class="t " style="left:252.4px;top:441.8px;font-size:14px;color:#eff1f9;letter-spacing:-0.026px;-webkit-text-stroke:0.5px #eff1f9;">Keras HP optimization base: General/batch_size=128 Gene<span class="e">…</span></div>
<svg class="i" style="left:652px;top:444px;" width="199.5" height="18" viewBox="0 0 199.5 18"><path d="M2.5 0 H190.5 L199.3 9 L190.5 18 H2.5 a2.5 2.5 0 0 1 -2.5 -2.5 V2.5 a2.5 2.5 0 0 1 2.5 -2.5 Z" fill="#803622"/></svg>
<div class="t " style="left:660px;top:443.3px;font-size:12px;color:#fff;letter-spacing:0.025px;">opt: d2b90906136c4e2fad18b<span class="e">…</span></div>
<svg class="i" style="left:856.0px;top:444px;" width="75.5" height="18" viewBox="0 0 75.5 18"><path d="M2.5 0 H66.5 L75.3 9 L66.5 18 H2.5 a2.5 2.5 0 0 1 -2.5 -2.5 V2.5 a2.5 2.5 0 0 1 2.5 -2.5 Z" fill="#a7359e"/></svg>
<div class="t " style="left:864.0px;top:443.3px;font-size:12px;color:#fff;letter-spacing:0.102px;">optimi<span class="e">…</span></div>
<svg class="i" style="left:951.6px;top:448.8px;" width="11" height="8" viewBox="0 0 11 8"><path d="M.5 4.3 L3.6 7.3 L10.4 .6" fill="none" stroke="#2196f3" stroke-width="1.2"/></svg>
<div class="t " style="left:967px;top:441.8px;font-size:14px;color:#2196f3;letter-spacing:-0.023px;">Completed</div>
<div class="t " style="left:1067.4px;top:441.8px;font-size:14px;color:#dce0ee;">30 minutes ago</div>
<div class="t " style="left:1217.4px;top:441.8px;font-size:14px;color:#dce0ee;">25 minutes ago</div>
<div class="t " style="left:1367.3px;top:441.8px;font-size:14px;color:#dce0ee;letter-spacing:-0.074px;">Automatic Hyper-Parameter<span class="e">…</span></div>
<div class="t " style="left:1567.3px;top:441.8px;font-size:14px;color:#dce0ee;">30</div>
<div class="t " style="left:1682.3px;top:441.8px;font-size:14px;color:#dce0ee;">128</div>
<div class="b " style="left:64px;top:477px;width:1842px;height:47px;background:#48527c;"></div>
<div class="b" style="left:90px;top:493px;width:16px;height:16px;background:#4d66ff;border-radius:2.5px"></div>
<svg class="i" style="left:90px;top:493px;" width="16" height="16" viewBox="0 0 16 16"><path d="M2.4 8.5 L5.7 11.8 L13.5 4" fill="none" stroke="#fff" stroke-width="1.35"/></svg>
<svg class="i" style="left:138.8px;top:488.8px;" width="11.4" height="18.4" viewBox="0 0 11.4 18.4"><path d="M2.7 4.2 H8.9 V5.5 H8.4 V8.8 C8.4 10 11.4 14 11.4 16.3 a2 2 0 0 1 -2 2 H2 a2 2 0 0 1 -2 -2 C0 14 3.2 9.8 3.2 8.4 V4.7 H2.7 Z" fill="#dce0ee"/>
<circle cx="7" cy="10.9" r="1.35" fill="#48527c"/><circle cx="4" cy="13.4" r="1.15" fill="#48527c"/><circle cx="6.9" cy="15.4" r="1.05" fill="#48527c"/>
<circle cx="5.9" cy=".9" r=".8" fill="#dce0ee"/><circle cx="8" cy="2.5" r=".8" fill="#dce0ee"/></svg>
<svg class="i" style="left:150.8px;top:500.5px;" width="14.8" height="9.8" viewBox="0 0 14.8 9.8"><path d="M7.4 0 L14.8 3.3 L7.4 6.6 L0 3.3 Z" fill="#dce0ee"/><path d="M2.4 5.3 V7.4 C4.2 9.4 10.6 9.4 12.4 7.4 V5.3 L7.4 7.6 Z" fill="#dce0ee"/><rect x="13.6" y="3.3" width="1.2" height="3.8" fill="#dce0ee"/></svg>
<div class="t " style="left:172px;top:489.8px;font-size:14px;color:#dce0ee;letter-spacing:-0.008px;">Training</div>
<div class="t " style="left:252.4px;top:489.8px;font-size:14px;color:#eff1f9;letter-spacing:-0.026px;-webkit-text-stroke:0.5px #eff1f9;">Keras HP optimization base: General/batch_size=128 Gene<span class="e">…</span></div>
<svg class="i" style="left:652px;top:492px;" width="199.5" height="18" viewBox="0 0 199.5 18"><path d="M2.5 0 H190.5 L199.3 9 L190.5 18 H2.5 a2.5 2.5 0 0 1 -2.5 -2.5 V2.5 a2.5 2.5 0 0 1 2.5 -2.5 Z" fill="#803622"/></svg>
<div class="t " style="left:660px;top:491.3px;font-size:12px;color:#fff;letter-spacing:0.025px;">opt: d2b90906136c4e2fad18b<span class="e">…</span></div>
<svg class="i" style="left:856.0px;top:492px;" width="75.5" height="18" viewBox="0 0 75.5 18"><path d="M2.5 0 H66.5 L75.3 9 L66.5 18 H2.5 a2.5 2.5 0 0 1 -2.5 -2.5 V2.5 a2.5 2.5 0 0 1 2.5 -2.5 Z" fill="#a7359e"/></svg>
<div class="t " style="left:864.0px;top:491.3px;font-size:12px;color:#fff;letter-spacing:0.102px;">optimi<span class="e">…</span></div>
<svg class="i" style="left:951.6px;top:496.8px;" width="11" height="8" viewBox="0 0 11 8"><path d="M.5 4.3 L3.6 7.3 L10.4 .6" fill="none" stroke="#2196f3" stroke-width="1.2"/></svg>
<div class="t " style="left:967px;top:489.8px;font-size:14px;color:#2196f3;letter-spacing:-0.023px;">Completed</div>
<div class="t " style="left:1067.4px;top:489.8px;font-size:14px;color:#dce0ee;">34 minutes ago</div>
<div class="t " style="left:1217.4px;top:489.8px;font-size:14px;color:#dce0ee;">30 minutes ago</div>
<div class="t " style="left:1367.3px;top:489.8px;font-size:14px;color:#dce0ee;letter-spacing:-0.074px;">Automatic Hyper-Parameter<span class="e">…</span></div>
<div class="t " style="left:1567.3px;top:489.8px;font-size:14px;color:#dce0ee;">30</div>
<div class="t " style="left:1682.3px;top:489.8px;font-size:14px;color:#dce0ee;">128</div>
<div class="b" style="left:90px;top:541px;width:16px;height:16px;border:2px solid #fff;border-radius:2.5px"></div>
<svg class="i" style="left:138.8px;top:536.8px;" width="11.4" height="18.4" viewBox="0 0 11.4 18.4"><path d="M2.7 4.2 H8.9 V5.5 H8.4 V8.8 C8.4 10 11.4 14 11.4 16.3 a2 2 0 0 1 -2 2 H2 a2 2 0 0 1 -2 -2 C0 14 3.2 9.8 3.2 8.4 V4.7 H2.7 Z" fill="#dce0ee"/>
<circle cx="7" cy="10.9" r="1.35" fill="#1a1e2c"/><circle cx="4" cy="13.4" r="1.15" fill="#1a1e2c"/><circle cx="6.9" cy="15.4" r="1.05" fill="#1a1e2c"/>
<circle cx="5.9" cy=".9" r=".8" fill="#dce0ee"/><circle cx="8" cy="2.5" r=".8" fill="#dce0ee"/></svg>
<svg class="i" style="left:150.8px;top:548.5px;" width="14.8" height="9.8" viewBox="0 0 14.8 9.8"><path d="M7.4 0 L14.8 3.3 L7.4 6.6 L0 3.3 Z" fill="#dce0ee"/><path d="M2.4 5.3 V7.4 C4.2 9.4 10.6 9.4 12.4 7.4 V5.3 L7.4 7.6 Z" fill="#dce0ee"/><rect x="13.6" y="3.3" width="1.2" height="3.8" fill="#dce0ee"/></svg>
<div class="t " style="left:172px;top:537.8px;font-size:14px;color:#dce0ee;letter-spacing:-0.008px;">Training</div>
<div class="t " style="left:252.4px;top:537.8px;font-size:14px;color:#eff1f9;letter-spacing:-0.026px;-webkit-text-stroke:0.5px #eff1f9;">Keras HP optimization base: General/batch_size=128 Gene<span class="e">…</span></div>
<svg class="i" style="left:652px;top:540px;" width="199.5" height="18" viewBox="0 0 199.5 18"><path d="M2.5 0 H190.5 L199.3 9 L190.5 18 H2.5 a2.5 2.5 0 0 1 -2.5 -2.5 V2.5 a2.5 2.5 0 0 1 2.5 -2.5 Z" fill="#803622"/></svg>
<div class="t " style="left:660px;top:539.3px;font-size:12px;color:#fff;letter-spacing:0.025px;">opt: d2b90906136c4e2fad18b<span class="e">…</span></div>
<svg class="i" style="left:856.0px;top:540px;" width="75.5" height="18" viewBox="0 0 75.5 18"><path d="M2.5 0 H66.5 L75.3 9 L66.5 18 H2.5 a2.5 2.5 0 0 1 -2.5 -2.5 V2.5 a2.5 2.5 0 0 1 2.5 -2.5 Z" fill="#a7359e"/></svg>
<div class="t " style="left:864.0px;top:539.3px;font-size:12px;color:#fff;letter-spacing:0.102px;">optimi<span class="e">…</span></div>
<svg class="i" style="left:951.6px;top:544.8px;" width="11" height="8" viewBox="0 0 11 8"><path d="M.5 4.3 L3.6 7.3 L10.4 .6" fill="none" stroke="#2196f3" stroke-width="1.2"/></svg>
<div class="t " style="left:967px;top:537.8px;font-size:14px;color:#2196f3;letter-spacing:-0.023px;">Completed</div>
<div class="t " style="left:1067.4px;top:537.8px;font-size:14px;color:#dce0ee;">39 minutes ago</div>
<div class="t " style="left:1217.4px;top:537.8px;font-size:14px;color:#dce0ee;">34 minutes ago</div>
<div class="t " style="left:1367.3px;top:537.8px;font-size:14px;color:#dce0ee;letter-spacing:-0.074px;">Automatic Hyper-Parameter<span class="e">…</span></div>
<div class="t " style="left:1567.3px;top:537.8px;font-size:14px;color:#dce0ee;">30</div>
<div class="t " style="left:1682.3px;top:537.8px;font-size:14px;color:#dce0ee;">128</div>
<div class="b " style="left:64px;top:573px;width:1842px;height:47px;background:#384161;"></div>
<div class="b" style="left:90px;top:589px;width:16px;height:16px;background:#4d66ff;border-radius:2.5px"></div>
<svg class="i" style="left:90px;top:589px;" width="16" height="16" viewBox="0 0 16 16"><path d="M2.4 8.5 L5.7 11.8 L13.5 4" fill="none" stroke="#fff" stroke-width="1.35"/></svg>
<svg class="i" style="left:138.8px;top:584.8px;" width="11.4" height="18.4" viewBox="0 0 11.4 18.4"><path d="M2.7 4.2 H8.9 V5.5 H8.4 V8.8 C8.4 10 11.4 14 11.4 16.3 a2 2 0 0 1 -2 2 H2 a2 2 0 0 1 -2 -2 C0 14 3.2 9.8 3.2 8.4 V4.7 H2.7 Z" fill="#dce0ee"/>
<circle cx="7" cy="10.9" r="1.35" fill="#384161"/><circle cx="4" cy="13.4" r="1.15" fill="#384161"/><circle cx="6.9" cy="15.4" r="1.05" fill="#384161"/>
<circle cx="5.9" cy=".9" r=".8" fill="#dce0ee"/><circle cx="8" cy="2.5" r=".8" fill="#dce0ee"/></svg>
<svg class="i" style="left:150.8px;top:599px;" width="14.4" height="11" viewBox="0 0 14.4 11"><rect x="0" y="-0.15" width="2.4" height="2.2" rx=".7" fill="#dce0ee"/><rect x="4.4" y="-0.15" width="6" height="2.2" rx=".7" fill="#dce0ee"/><rect x="0" y="4.35" width="4.6" height="2.2" rx=".7" fill="#dce0ee"/><rect x="6.4" y="4.35" width="2" height="2.2" rx=".7" fill="#dce0ee"/><rect x="9.6" y="4.35" width="2" height="2.2" rx=".7" fill="#dce0ee"/><rect x="12.4" y="4.35" width="1.8" height="2.2" rx=".7" fill="#dce0ee"/><rect x="0" y="8.85" width="2.4" height="2.2" rx=".7" fill="#dce0ee"/><rect x="4.4" y="8.85" width="6.6" height="2.2" rx=".7" fill="#dce0ee"/></svg>
<div class="t " style="left:172.4px;top:585.8px;font-size:14px;color:#dce0ee;letter-spacing:-0.451px;">Data Pro<span class="e">…</span></div>
<div class="t " style="left:252.4px;top:585.8px;font-size:14px;color:#eff1f9;font-style:italic;-webkit-text-stroke:0.35px #eff1f9;">data_3</div>
<div class="b" style="left:652px;top:588px;width:70px;height:18px;background:#5a658e;border:1px solid #8492c2;border-radius:4px;overflow:hidden"><svg style="position:absolute;left:0;top:0" width="12" height="16" viewBox="0 0 12 16"><path d="M10.17 9.91 L9.19 12.28 L6.96 11.81 L6.01 12.76 L6.48 14.99 L4.11 15.97 L2.87 14.06 L1.53 14.06 L0.29 15.97 L-2.08 14.99 L-1.61 12.76 L-2.56 11.81 L-4.79 12.28 L-5.77 9.91 L-3.86 8.67 L-3.86 7.33 L-5.77 6.09 L-4.79 3.72 L-2.56 4.19 L-1.61 3.24 L-2.08 1.01 L0.29 0.03 L1.53 1.94 L2.87 1.94 L4.11 0.03 L6.48 1.01 L6.01 3.24 L6.96 4.19 L9.19 3.72 L10.17 6.09 L8.26 7.33 L8.26 8.67 Z" fill="#8492c2"/><circle cx="2.2" cy="8" r="3.5" fill="#5a658e"/></svg></div>
<div class="t " style="left:667px;top:587.2px;font-size:11px;color:#fff;letter-spacing:-0.414px;">DATASET</div>
<svg class="i" style="left:951.6px;top:592.8px;" width="11" height="8" viewBox="0 0 11 8"><path d="M.5 4.3 L3.6 7.3 L10.4 .6" fill="none" stroke="#2196f3" stroke-width="1.2"/></svg>
<div class="t " style="left:967px;top:585.8px;font-size:14px;color:#2196f3;letter-spacing:0.067px;">Aborted</div>
<div class="t " style="left:1067.4px;top:585.8px;font-size:14px;color:#dce0ee;">2 hours ago</div>
<div class="t " style="left:1217.4px;top:585.8px;font-size:14px;color:#dce0ee;">42 minutes ago</div>
<div class="t " style="left:1567.3px;top:585.8px;font-size:14px;color:#dce0ee;">0</div>
<div class="b" style="left:90px;top:637px;width:16px;height:16px;border:2px solid #fff;border-radius:2.5px"></div>
<svg class="i" style="left:138.8px;top:632.8px;" width="11.4" height="18.4" viewBox="0 0 11.4 18.4"><path d="M2.7 4.2 H8.9 V5.5 H8.4 V8.8 C8.4 10 11.4 14 11.4 16.3 a2 2 0 0 1 -2 2 H2 a2 2 0 0 1 -2 -2 C0 14 3.2 9.8 3.2 8.4 V4.7 H2.7 Z" fill="#dce0ee"/>
<circle cx="7" cy="10.9" r="1.35" fill="#1a1e2c"/><circle cx="4" cy="13.4" r="1.15" fill="#1a1e2c"/><circle cx="6.9" cy="15.4" r="1.05" fill="#1a1e2c"/>
<circle cx="5.9" cy=".9" r=".8" fill="#dce0ee"/><circle cx="8" cy="2.5" r=".8" fill="#dce0ee"/></svg>
<svg class="i" style="left:150.8px;top:647px;" width="14.4" height="11" viewBox="0 0 14.4 11"><rect x="0" y="-0.15" width="2.4" height="2.2" rx=".7" fill="#dce0ee"/><rect x="4.4" y="-0.15" width="6" height="2.2" rx=".7" fill="#dce0ee"/><rect x="0" y="4.35" width="4.6" height="2.2" rx=".7" fill="#dce0ee"/><rect x="6.4" y="4.35" width="2" height="2.2" rx=".7" fill="#dce0ee"/><rect x="9.6" y="4.35" width="2" height="2.2" rx=".7" fill="#dce0ee"/><rect x="12.4" y="4.35" width="1.8" height="2.2" rx=".7" fill="#dce0ee"/><rect x="0" y="8.85" width="2.4" height="2.2" rx=".7" fill="#dce0ee"/><rect x="4.4" y="8.85" width="6.6" height="2.2" rx=".7" fill="#dce0ee"/></svg>
<div class="t " style="left:172.4px;top:633.8px;font-size:14px;color:#dce0ee;letter-spacing:-0.451px;">Data Pro<span class="e">…</span></div>
<div class="t " style="left:252.4px;top:633.8px;font-size:14px;color:#eff1f9;font-style:italic;-webkit-text-stroke:0.35px #eff1f9;">data_2</div>
<div class="b" style="left:652px;top:636px;width:70px;height:18px;background:#5a658e;border:1px solid #8492c2;border-radius:4px;overflow:hidden"><svg style="position:absolute;left:0;top:0" width="12" height="16" viewBox="0 0 12 16"><path d="M10.17 9.91 L9.19 12.28 L6.96 11.81 L6.01 12.76 L6.48 14.99 L4.11 15.97 L2.87 14.06 L1.53 14.06 L0.29 15.97 L-2.08 14.99 L-1.61 12.76 L-2.56 11.81 L-4.79 12.28 L-5.77 9.91 L-3.86 8.67 L-3.86 7.33 L-5.77 6.09 L-4.79 3.72 L-2.56 4.19 L-1.61 3.24 L-2.08 1.01 L0.29 0.03 L1.53 1.94 L2.87 1.94 L4.11 0.03 L6.48 1.01 L6.01 3.24 L6.96 4.19 L9.19 3.72 L10.17 6.09 L8.26 7.33 L8.26 8.67 Z" fill="#8492c2"/><circle cx="2.2" cy="8" r="3.5" fill="#5a658e"/></svg></div>
<div class="t " style="left:667px;top:635.2px;font-size:11px;color:#fff;letter-spacing:-0.414px;">DATASET</div>
<svg class="i" style="left:951.6px;top:640.8px;" width="11" height="8" viewBox="0 0 11 8"><path d="M.5 4.3 L3.6 7.3 L10.4 .6" fill="none" stroke="#2196f3" stroke-width="1.2"/></svg>
<div class="t " style="left:967px;top:633.8px;font-size:14px;color:#2196f3;letter-spacing:0.067px;">Aborted</div>
<div class="t " style="left:1067.4px;top:633.8px;font-size:14px;color:#dce0ee;">2 hours ago</div>
<div class="t " style="left:1217.4px;top:633.8px;font-size:14px;color:#dce0ee;">42 minutes ago</div>
<div class="t " style="left:1567.3px;top:633.8px;font-size:14px;color:#dce0ee;">0</div>
<div class="b" style="left:90px;top:685px;width:16px;height:16px;border:2px solid #fff;border-radius:2.5px"></div>
<svg class="i" style="left:138.8px;top:680.8px;" width="11.4" height="18.4" viewBox="0 0 11.4 18.4"><path d="M2.7 4.2 H8.9 V5.5 H8.4 V8.8 C8.4 10 11.4 14 11.4 16.3 a2 2 0 0 1 -2 2 H2 a2 2 0 0 1 -2 -2 C0 14 3.2 9.8 3.2 8.4 V4.7 H2.7 Z" fill="#dce0ee"/>
<circle cx="7" cy="10.9" r="1.35" fill="#1a1e2c"/><circle cx="4" cy="13.4" r="1.15" fill="#1a1e2c"/><circle cx="6.9" cy="15.4" r="1.05" fill="#1a1e2c"/>
<circle cx="5.9" cy=".9" r=".8" fill="#dce0ee"/><circle cx="8" cy="2.5" r=".8" fill="#dce0ee"/></svg>
<svg class="i" style="left:150.8px;top:692.5px;" width="14.8" height="9.8" viewBox="0 0 14.8 9.8"><path d="M7.4 0 L14.8 3.3 L7.4 6.6 L0 3.3 Z" fill="#dce0ee"/><path d="M2.4 5.3 V7.4 C4.2 9.4 10.6 9.4 12.4 7.4 V5.3 L7.4 7.6 Z" fill="#dce0ee"/><rect x="13.6" y="3.3" width="1.2" height="3.8" fill="#dce0ee"/></svg>
<div class="t " style="left:172px;top:681.8px;font-size:14px;color:#dce0ee;letter-spacing:-0.008px;">Training</div>
<div class="t " style="left:252.4px;top:681.8px;font-size:14px;color:#eff1f9;-webkit-text-stroke:0.5px #eff1f9;letter-spacing:-0.126px;">Keras HP optimization base</div>
<svg class="i" style="left:652px;top:684px;" width="59.5" height="18" viewBox="0 0 59.5 18"><path d="M2.5 0 H50.5 L59.3 9 L50.5 18 H2.5 a2.5 2.5 0 0 1 -2.5 -2.5 V2.5 a2.5 2.5 0 0 1 2.5 -2.5 Z" fill="#4a2d52"/></svg>
<div class="t " style="left:660px;top:683.3px;font-size:12px;color:#fff;letter-spacing:-0.270px;">Keras</div>
<svg class="i" style="left:716.0px;top:684px;" width="74" height="18" viewBox="0 0 74 18"><path d="M2.5 0 H65 L73.8 9 L65 18 H2.5 a2.5 2.5 0 0 1 -2.5 -2.5 V2.5 a2.5 2.5 0 0 1 2.5 -2.5 Z" fill="#3a7b78"/></svg>
<div class="t " style="left:724.0px;top:683.3px;font-size:12px;color:#fff;letter-spacing:-0.008px;">example</div>
<svg class="i" style="left:951.6px;top:688.8px;" width="11" height="8" viewBox="0 0 11 8"><path d="M.5 4.3 L3.6 7.3 L10.4 .6" fill="none" stroke="#2196f3" stroke-width="1.2"/></svg>
<div class="t " style="left:967px;top:681.8px;font-size:14px;color:#2196f3;letter-spacing:-0.023px;">Completed</div>
<div class="t " style="left:1067.4px;top:681.8px;font-size:14px;color:#dce0ee;">an hour ago</div>
<div class="t " style="left:1217.4px;top:681.8px;font-size:14px;color:#dce0ee;">an hour ago</div>
<div class="t " style="left:1567.3px;top:681.8px;font-size:14px;color:#dce0ee;">6</div>
<div class="t " style="left:1682.3px;top:681.8px;font-size:14px;color:#dce0ee;">128</div>
<div class="b" style="left:90px;top:733px;width:16px;height:16px;border:2px solid #fff;border-radius:2.5px"></div>
<svg class="i" style="left:138.8px;top:728.8px;" width="11.4" height="18.4" viewBox="0 0 11.4 18.4"><path d="M2.7 4.2 H8.9 V5.5 H8.4 V8.8 C8.4 10 11.4 14 11.4 16.3 a2 2 0 0 1 -2 2 H2 a2 2 0 0 1 -2 -2 C0 14 3.2 9.8 3.2 8.4 V4.7 H2.7 Z" fill="#dce0ee"/>
<circle cx="7" cy="10.9" r="1.35" fill="#1a1e2c"/><circle cx="4" cy="13.4" r="1.15" fill="#1a1e2c"/><circle cx="6.9" cy="15.4" r="1.05" fill="#1a1e2c"/>
<circle cx="5.9" cy=".9" r=".8" fill="#dce0ee"/><circle cx="8" cy="2.5" r=".8" fill="#dce0ee"/></svg>
<svg class="i" style="left:150.8px;top:740.5px;" width="14.8" height="9.8" viewBox="0 0 14.8 9.8"><path d="M7.4 0 L14.8 3.3 L7.4 6.6 L0 3.3 Z" fill="#dce0ee"/><path d="M2.4 5.3 V7.4 C4.2 9.4 10.6 9.4 12.4 7.4 V5.3 L7.4 7.6 Z" fill="#dce0ee"/><rect x="13.6" y="3.3" width="1.2" height="3.8" fill="#dce0ee"/></svg>
<div class="t " style="left:172px;top:729.8px;font-size:14px;color:#dce0ee;letter-spacing:-0.008px;">Training</div>
<div class="t " style="left:252.4px;top:729.8px;font-size:14px;color:#eff1f9;-webkit-text-stroke:0.5px #eff1f9;letter-spacing:-0.231px;">Clone Of pytorch mnist train</div>
<svg class="i" style="left:652px;top:732px;" width="65" height="18" viewBox="0 0 65 18"><path d="M2.5 0 H56 L64.8 9 L56 18 H2.5 a2.5 2.5 0 0 1 -2.5 -2.5 V2.5 a2.5 2.5 0 0 1 2.5 -2.5 Z" fill="#5086c8"/></svg>
<div class="t " style="left:660px;top:731.3px;font-size:12px;color:#fff;letter-spacing:-0.266px;">MNIST</div>
<svg class="i" style="left:721.5px;top:732px;" width="74" height="18" viewBox="0 0 74 18"><path d="M2.5 0 H65 L73.8 9 L65 18 H2.5 a2.5 2.5 0 0 1 -2.5 -2.5 V2.5 a2.5 2.5 0 0 1 2.5 -2.5 Z" fill="#3a7b78"/></svg>
<div class="t " style="left:729.5px;top:731.3px;font-size:12px;color:#fff;letter-spacing:-0.008px;">example</div>
<svg class="i" style="left:951.6px;top:736.8px;" width="11" height="8" viewBox="0 0 11 8"><path d="M.5 4.3 L3.6 7.3 L10.4 .6" fill="none" stroke="#2196f3" stroke-width="1.2"/></svg>
<div class="t " style="left:967px;top:729.8px;font-size:14px;color:#2196f3;letter-spacing:0.067px;">Aborted</div>
<div class="t " style="left:1067.4px;top:729.8px;font-size:14px;color:#dce0ee;">an hour ago</div>
<div class="t " style="left:1217.4px;top:729.8px;font-size:14px;color:#dce0ee;">an hour ago</div>
<div class="t " style="left:1567.3px;top:729.8px;font-size:14px;color:#dce0ee;">24065</div>
<div class="b " style="left:64px;top:765px;width:1842px;height:47px;background:#384161;"></div>
<div class="b" style="left:90px;top:781px;width:16px;height:16px;background:#4d66ff;border-radius:2.5px"></div>
<svg class="i" style="left:90px;top:781px;" width="16" height="16" viewBox="0 0 16 16"><path d="M2.4 8.5 L5.7 11.8 L13.5 4" fill="none" stroke="#fff" stroke-width="1.35"/></svg>
<svg class="i" style="left:138.8px;top:776.8px;" width="11.4" height="18.4" viewBox="0 0 11.4 18.4"><path d="M2.7 4.2 H8.9 V5.5 H8.4 V8.8 C8.4 10 11.4 14 11.4 16.3 a2 2 0 0 1 -2 2 H2 a2 2 0 0 1 -2 -2 C0 14 3.2 9.8 3.2 8.4 V4.7 H2.7 Z" fill="#dce0ee"/>
<circle cx="7" cy="10.9" r="1.35" fill="#384161"/><circle cx="4" cy="13.4" r="1.15" fill="#384161"/><circle cx="6.9" cy="15.4" r="1.05" fill="#384161"/>
<circle cx="5.9" cy=".9" r=".8" fill="#dce0ee"/><circle cx="8" cy="2.5" r=".8" fill="#dce0ee"/></svg>
<svg class="i" style="left:150.8px;top:788.5px;" width="14.8" height="9.8" viewBox="0 0 14.8 9.8"><path d="M7.4 0 L14.8 3.3 L7.4 6.6 L0 3.3 Z" fill="#dce0ee"/><path d="M2.4 5.3 V7.4 C4.2 9.4 10.6 9.4 12.4 7.4 V5.3 L7.4 7.6 Z" fill="#dce0ee"/><rect x="13.6" y="3.3" width="1.2" height="3.8" fill="#dce0ee"/></svg>
<div class="t " style="left:172px;top:777.8px;font-size:14px;color:#dce0ee;letter-spacing:-0.008px;">Training</div>
<div class="t " style="left:252.4px;top:777.8px;font-size:14px;color:#eff1f9;-webkit-text-stroke:0.5px #eff1f9;">PyTorch Cifar</div>
<svg class="i" style="left:652px;top:780px;" width="71.6" height="18" viewBox="0 0 71.6 18"><path d="M2.5 0 H62.6 L71.4 9 L62.6 18 H2.5 a2.5 2.5 0 0 1 -2.5 -2.5 V2.5 a2.5 2.5 0 0 1 2.5 -2.5 Z" fill="#bb4640"/></svg>
<div class="t " style="left:660px;top:779.3px;font-size:12px;color:#fff;letter-spacing:-0.093px;">PyTorch</div>
<svg class="i" style="left:951.6px;top:783.2px;" width="11" height="11" viewBox="0 0 11 11"><path d="M.7 10.3 L1.4 7.5 L7.5 1.4 a1.25 1.25 0 0 1 1.8 0 L9.6 1.7 a1.25 1.25 0 0 1 0 1.8 L3.5 9.6 Z M6.6 2.4 L8.6 4.4" fill="none" stroke="#727ca6" stroke-width="1.25" stroke-linejoin="round"/></svg>
<div class="t " style="left:967px;top:777.8px;font-size:14px;color:#727ca6;letter-spacing:0.133px;">Draft</div>
<div class="t " style="left:1217.4px;top:777.8px;font-size:14px;color:#dce0ee;">an hour ago</div>
<div class="t " style="left:1567.3px;top:777.8px;font-size:14px;color:#dce0ee;">0</div>
<div class="b" style="left:90px;top:829px;width:16px;height:16px;border:2px solid #fff;border-radius:2.5px"></div>
<svg class="i" style="left:138.8px;top:824.8px;" width="11.4" height="18.4" viewBox="0 0 11.4 18.4"><path d="M2.7 4.2 H8.9 V5.5 H8.4 V8.8 C8.4 10 11.4 14 11.4 16.3 a2 2 0 0 1 -2 2 H2 a2 2 0 0 1 -2 -2 C0 14 3.2 9.8 3.2 8.4 V4.7 H2.7 Z" fill="#dce0ee"/>
<circle cx="7" cy="10.9" r="1.35" fill="#1a1e2c"/><circle cx="4" cy="13.4" r="1.15" fill="#1a1e2c"/><circle cx="6.9" cy="15.4" r="1.05" fill="#1a1e2c"/>
<circle cx="5.9" cy=".9" r=".8" fill="#dce0ee"/><circle cx="8" cy="2.5" r=".8" fill="#dce0ee"/></svg>
<svg class="i" style="left:150.8px;top:836.5px;" width="14.8" height="9.8" viewBox="0 0 14.8 9.8"><path d="M7.4 0 L14.8 3.3 L7.4 6.6 L0 3.3 Z" fill="#dce0ee"/><path d="M2.4 5.3 V7.4 C4.2 9.4 10.6 9.4 12.4 7.4 V5.3 L7.4 7.6 Z" fill="#dce0ee"/><rect x="13.6" y="3.3" width="1.2" height="3.8" fill="#dce0ee"/></svg>
<div class="t " style="left:172px;top:825.8px;font-size:14px;color:#dce0ee;letter-spacing:-0.008px;">Training</div>
<div class="t " style="left:252.4px;top:825.8px;font-size:14px;color:#eff1f9;-webkit-text-stroke:0.5px #eff1f9;letter-spacing:0.069px;">TensorFlow mnist with summaries</div>
<svg class="i" style="left:652px;top:828px;" width="65" height="18" viewBox="0 0 65 18"><path d="M2.5 0 H56 L64.8 9 L56 18 H2.5 a2.5 2.5 0 0 1 -2.5 -2.5 V2.5 a2.5 2.5 0 0 1 2.5 -2.5 Z" fill="#5086c8"/></svg>
<div class="t " style="left:660px;top:827.3px;font-size:12px;color:#fff;letter-spacing:-0.266px;">MNIST</div>
<svg class="i" style="left:951.6px;top:831.2px;" width="11" height="11" viewBox="0 0 11 11"><path d="M.7 10.3 L1.4 7.5 L7.5 1.4 a1.25 1.25 0 0 1 1.8 0 L9.6 1.7 a1.25 1.25 0 0 1 0 1.8 L3.5 9.6 Z M6.6 2.4 L8.6 4.4" fill="none" stroke="#727ca6" stroke-width="1.25" stroke-linejoin="round"/></svg>
<div class="t " style="left:967px;top:825.8px;font-size:14px;color:#727ca6;letter-spacing:0.133px;">Draft</div>
<div class="t " style="left:1217.4px;top:825.8px;font-size:14px;color:#dce0ee;">an hour ago</div>
<div class="t " style="left:1567.3px;top:825.8px;font-size:14px;color:#dce0ee;">0</div>
<div class="b" style="left:90px;top:877px;width:16px;height:16px;border:2px solid #fff;border-radius:2.5px"></div>
<svg class="i" style="left:138.8px;top:872.8px;" width="11.4" height="18.4" viewBox="0 0 11.4 18.4"><path d="M2.7 4.2 H8.9 V5.5 H8.4 V8.8 C8.4 10 11.4 14 11.4 16.3 a2 2 0 0 1 -2 2 H2 a2 2 0 0 1 -2 -2 C0 14 3.2 9.8 3.2 8.4 V4.7 H2.7 Z" fill="#dce0ee"/>
<circle cx="7" cy="10.9" r="1.35" fill="#1a1e2c"/><circle cx="4" cy="13.4" r="1.15" fill="#1a1e2c"/><circle cx="6.9" cy="15.4" r="1.05" fill="#1a1e2c"/>
<circle cx="5.9" cy=".9" r=".8" fill="#dce0ee"/><circle cx="8" cy="2.5" r=".8" fill="#dce0ee"/></svg>
<svg class="i" style="left:150.8px;top:884.5px;" width="14.8" height="9.8" viewBox="0 0 14.8 9.8"><path d="M7.4 0 L14.8 3.3 L7.4 6.6 L0 3.3 Z" fill="#dce0ee"/><path d="M2.4 5.3 V7.4 C4.2 9.4 10.6 9.4 12.4 7.4 V5.3 L7.4 7.6 Z" fill="#dce0ee"/><rect x="13.6" y="3.3" width="1.2" height="3.8" fill="#dce0ee"/></svg>
<div class="t " style="left:172px;top:873.8px;font-size:14px;color:#dce0ee;letter-spacing:-0.008px;">Training</div>
<div class="t " style="left:252.4px;top:873.8px;font-size:14px;color:#eff1f9;-webkit-text-stroke:0.5px #eff1f9;letter-spacing:0.018px;">Pytorch lightning example</div>
<svg class="i" style="left:652px;top:876px;" width="65" height="18" viewBox="0 0 65 18"><path d="M2.5 0 H56 L64.8 9 L56 18 H2.5 a2.5 2.5 0 0 1 -2.5 -2.5 V2.5 a2.5 2.5 0 0 1 2.5 -2.5 Z" fill="#5086c8"/></svg>
<div class="t " style="left:660px;top:875.3px;font-size:12px;color:#fff;letter-spacing:-0.266px;">MNIST</div>
<svg class="i" style="left:721.5px;top:876px;" width="71.6" height="18" viewBox="0 0 71.6 18"><path d="M2.5 0 H62.6 L71.4 9 L62.6 18 H2.5 a2.5 2.5 0 0 1 -2.5 -2.5 V2.5 a2.5 2.5 0 0 1 2.5 -2.5 Z" fill="#bb4640"/></svg>
<div class="t " style="left:729.5px;top:875.3px;font-size:12px;color:#fff;letter-spacing:-0.093px;">PyTorch</div>
<svg class="i" style="left:797.6px;top:876px;" width="74" height="18" viewBox="0 0 74 18"><path d="M2.5 0 H65 L73.8 9 L65 18 H2.5 a2.5 2.5 0 0 1 -2.5 -2.5 V2.5 a2.5 2.5 0 0 1 2.5 -2.5 Z" fill="#3a7b78"/></svg>
<div class="t " style="left:805.6px;top:875.3px;font-size:12px;color:#fff;letter-spacing:-0.008px;">example</div>
<svg class="i" style="left:951.6px;top:879.2px;" width="11" height="11" viewBox="0 0 11 11"><path d="M.7 10.3 L1.4 7.5 L7.5 1.4 a1.25 1.25 0 0 1 1.8 0 L9.6 1.7 a1.25 1.25 0 0 1 0 1.8 L3.5 9.6 Z M6.6 2.4 L8.6 4.4" fill="none" stroke="#727ca6" stroke-width="1.25" stroke-linejoin="round"/></svg>
<div class="t " style="left:967px;top:873.8px;font-size:14px;color:#727ca6;letter-spacing:0.133px;">Draft</div>
<div class="t " style="left:1217.4px;top:873.8px;font-size:14px;color:#dce0ee;">an hour ago</div>
<div class="t " style="left:1567.3px;top:873.8px;font-size:14px;color:#dce0ee;">0</div>
<div class="b" style="left:90px;top:925px;width:16px;height:16px;border:2px solid #fff;border-radius:2.5px"></div>
<svg class="i" style="left:138.8px;top:920.8px;" width="11.4" height="18.4" viewBox="0 0 11.4 18.4"><path d="M2.7 4.2 H8.9 V5.5 H8.4 V8.8 C8.4 10 11.4 14 11.4 16.3 a2 2 0 0 1 -2 2 H2 a2 2 0 0 1 -2 -2 C0 14 3.2 9.8 3.2 8.4 V4.7 H2.7 Z" fill="#dce0ee"/>
<circle cx="7" cy="10.9" r="1.35" fill="#1a1e2c"/><circle cx="4" cy="13.4" r="1.15" fill="#1a1e2c"/><circle cx="6.9" cy="15.4" r="1.05" fill="#1a1e2c"/>
<circle cx="5.9" cy=".9" r=".8" fill="#dce0ee"/><circle cx="8" cy="2.5" r=".8" fill="#dce0ee"/></svg>
<svg class="i" style="left:150.8px;top:932.5px;" width="14.8" height="9.8" viewBox="0 0 14.8 9.8"><path d="M7.4 0 L14.8 3.3 L7.4 6.6 L0 3.3 Z" fill="#dce0ee"/><path d="M2.4 5.3 V7.4 C4.2 9.4 10.6 9.4 12.4 7.4 V5.3 L7.4 7.6 Z" fill="#dce0ee"/><rect x="13.6" y="3.3" width="1.2" height="3.8" fill="#dce0ee"/></svg>
<div class="t " style="left:172px;top:921.8px;font-size:14px;color:#dce0ee;letter-spacing:-0.008px;">Training</div>
<div class="t " style="left:252.4px;top:921.8px;font-size:14px;color:#eff1f9;-webkit-text-stroke:0.5px #eff1f9;letter-spacing:-0.144px;">LightGBM example</div>
<svg class="i" style="left:951.6px;top:927.2px;" width="11" height="11" viewBox="0 0 11 11"><path d="M.7 10.3 L1.4 7.5 L7.5 1.4 a1.25 1.25 0 0 1 1.8 0 L9.6 1.7 a1.25 1.25 0 0 1 0 1.8 L3.5 9.6 Z M6.6 2.4 L8.6 4.4" fill="none" stroke="#727ca6" stroke-width="1.25" stroke-linejoin="round"/></svg>
<div class="t " style="left:967px;top:921.8px;font-size:14px;color:#727ca6;letter-spacing:0.133px;">Draft</div>
<div class="t " style="left:1217.4px;top:921.8px;font-size:14px;color:#dce0ee;">an hour ago</div>
<div class="t " style="left:1567.3px;top:921.8px;font-size:14px;color:#dce0ee;">0</div>
<div class="b" style="left:90px;top:973px;width:16px;height:16px;border:2px solid #fff;border-radius:2.5px"></div>
<svg class="i" style="left:138.8px;top:968.8px;" width="11.4" height="18.4" viewBox="0 0 11.4 18.4"><path d="M2.7 4.2 H8.9 V5.5 H8.4 V8.8 C8.4 10 11.4 14 11.4 16.3 a2 2 0 0 1 -2 2 H2 a2 2 0 0 1 -2 -2 C0 14 3.2 9.8 3.2 8.4 V4.7 H2.7 Z" fill="#dce0ee"/>
<circle cx="7" cy="10.9" r="1.35" fill="#1a1e2c"/><circle cx="4" cy="13.4" r="1.15" fill="#1a1e2c"/><circle cx="6.9" cy="15.4" r="1.05" fill="#1a1e2c"/>
<circle cx="5.9" cy=".9" r=".8" fill="#dce0ee"/><circle cx="8" cy="2.5" r=".8" fill="#dce0ee"/></svg>
<svg class="i" style="left:150.8px;top:983px;" width="14.4" height="11" viewBox="0 0 14.4 11"><rect x="0" y="-0.15" width="2.4" height="2.2" rx=".7" fill="#dce0ee"/><rect x="4.4" y="-0.15" width="6" height="2.2" rx=".7" fill="#dce0ee"/><rect x="0" y="4.35" width="4.6" height="2.2" rx=".7" fill="#dce0ee"/><rect x="6.4" y="4.35" width="2" height="2.2" rx=".7" fill="#dce0ee"/><rect x="9.6" y="4.35" width="2" height="2.2" rx=".7" fill="#dce0ee"/><rect x="12.4" y="4.35" width="1.8" height="2.2" rx=".7" fill="#dce0ee"/><rect x="0" y="8.85" width="2.4" height="2.2" rx=".7" fill="#dce0ee"/><rect x="4.4" y="8.85" width="6.6" height="2.2" rx=".7" fill="#dce0ee"/></svg>
<div class="t " style="left:172.4px;top:969.8px;font-size:14px;color:#dce0ee;letter-spacing:-0.451px;">Data Pro<span class="e">…</span></div>
<div class="t " style="left:252.4px;top:969.8px;font-size:14px;color:#eff1f9;font-style:italic;-webkit-text-stroke:0.35px #eff1f9;">data_1</div>
<div class="b" style="left:652px;top:972px;width:70px;height:18px;background:#5a658e;border:1px solid #8492c2;border-radius:4px;overflow:hidden"><svg style="position:absolute;left:0;top:0" width="12" height="16" viewBox="0 0 12 16"><path d="M10.17 9.91 L9.19 12.28 L6.96 11.81 L6.01 12.76 L6.48 14.99 L4.11 15.97 L2.87 14.06 L1.53 14.06 L0.29 15.97 L-2.08 14.99 L-1.61 12.76 L-2.56 11.81 L-4.79 12.28 L-5.77 9.91 L-3.86 8.67 L-3.86 7.33 L-5.77 6.09 L-4.79 3.72 L-2.56 4.19 L-1.61 3.24 L-2.08 1.01 L0.29 0.03 L1.53 1.94 L2.87 1.94 L4.11 0.03 L6.48 1.01 L6.01 3.24 L6.96 4.19 L9.19 3.72 L10.17 6.09 L8.26 7.33 L8.26 8.67 Z" fill="#8492c2"/><circle cx="2.2" cy="8" r="3.5" fill="#5a658e"/></svg></div>
<div class="t " style="left:667px;top:971.2px;font-size:11px;color:#fff;letter-spacing:-0.414px;">DATASET</div>
<svg class="i" style="left:951.6px;top:976.8px;" width="11" height="8" viewBox="0 0 11 8"><path d="M.5 4.3 L3.6 7.3 L10.4 .6" fill="none" stroke="#2196f3" stroke-width="1.2"/></svg>
<div class="t " style="left:967px;top:969.8px;font-size:14px;color:#2196f3;letter-spacing:-0.023px;">Completed</div>
<div class="t " style="left:1067.4px;top:969.8px;font-size:14px;color:#dce0ee;">2 hours ago</div>
<div class="t " style="left:1217.4px;top:969.8px;font-size:14px;color:#dce0ee;">2 hours ago</div>
<div class="t " style="left:1567.3px;top:969.8px;font-size:14px;color:#dce0ee;">0</div>
<svg class="i" style="left:144px;top:1016.8px;" width="2" height="2" viewBox="0 0 2 2"><circle cx="1" cy="1" r=".8" fill="#dce0ee"/></svg>
<div class="b " style="left:1910px;top:236px;width:6px;height:677px;background:#5a5f70;border-radius:3px"></div>
<div class="b " style="left:68px;top:1022px;width:1813px;height:6px;background:#5a5f70;border-radius:3px"></div>
<div class="b " style="left:64px;top:1032px;width:1856px;height:2px;background:#d3ff00;"></div>
<div class="b " style="left:64px;top:1034px;width:1856px;height:46px;background:#3a4058;"></div>
<div class="t " style="left:91.5px;top:1048.0px;font-size:12px;color:#dce0ee;letter-spacing:-0.051px;text-decoration:underline;text-underline-offset:2px">SHOW 3 EXPERIMENTS SELECTED</div>
<div class="t " style="left:343.8px;top:1048.0px;font-size:12px;color:#dce0ee;letter-spacing:-0.084px;">COMPARE</div>
<div class="b " style="left:427px;top:1047px;width:1px;height:20px;background:#565d7e;"></div>
<div class="b " style="left:496px;top:1047px;width:1px;height:20px;background:#565d7e;"></div>
<div class="b " style="left:741px;top:1047px;width:1px;height:20px;background:#565d7e;"></div>
<div class="b " style="left:810px;top:1047px;width:1px;height:20px;background:#565d7e;"></div>
<div class="b" style="left:352px;top:511px;width:239px;height:486px;background:#fff;border-radius:4px;box-shadow:0 2px 4px -1px rgba(0,0,0,.2),0 4px 5px 0 rgba(0,0,0,.14),0 1px 10px 0 rgba(0,0,0,.12)"></div>
<div class="b " style="left:352px;top:511px;width:239px;height:40px;background:#f5f5f5;border-radius:4px 4px 0 0"></div>
<div class="b " style="left:352px;top:631px;width:239px;height:2px;background:#e6e6e6;"></div>
<div class="b " style="left:352px;top:873px;width:239px;height:2px;background:#e6e6e6;"></div>
<div class="b " style="left:352px;top:915px;width:239px;height:2px;background:#e6e6e6;"></div>
<div class="t " style="left:400px;top:520.8px;font-size:14px;color:#1f1f1f;letter-spacing:-0.087px;-webkit-text-stroke:0.45px #1f1f1f;">View Full Screen</div>
<div class="t " style="left:400px;top:560.8px;font-size:14px;color:#a8a8a8;letter-spacing:-0.185px;-webkit-text-stroke:0.45px #a8a8a8;">Manage Queue</div>
<div class="t " style="left:400px;top:600.8px;font-size:14px;color:#a8a8a8;letter-spacing:0.015px;-webkit-text-stroke:0.45px #a8a8a8;">View Worker</div>
<div class="t " style="left:400px;top:642.8px;font-size:14px;color:#a8a8a8;letter-spacing:-0.272px;-webkit-text-stroke:0.45px #a8a8a8;">Share</div>
<div class="t " style="left:400px;top:682.8px;font-size:14px;color:#1f1f1f;letter-spacing:0.134px;-webkit-text-stroke:0.45px #1f1f1f;">Archive (3 items)</div>
<div class="t " style="left:400px;top:722.8px;font-size:14px;color:#1f1f1f;letter-spacing:-0.023px;-webkit-text-stroke:0.45px #1f1f1f;">Enqueue (2 items)</div>
<div class="t " style="left:400px;top:762.8px;font-size:14px;color:#1f1f1f;letter-spacing:0.053px;-webkit-text-stroke:0.45px #1f1f1f;">Reset (2 items)</div>
<div class="t " style="left:400px;top:802.8px;font-size:14px;color:#a8a8a8;letter-spacing:0.308px;-webkit-text-stroke:0.45px #a8a8a8;">Abort</div>
<div class="t " style="left:400px;top:842.8px;font-size:14px;color:#1f1f1f;letter-spacing:0.144px;-webkit-text-stroke:0.45px #1f1f1f;">Publish (2 items)</div>
<div class="t " style="left:400px;top:884.8px;font-size:14px;color:#1f1f1f;letter-spacing:0.109px;-webkit-text-stroke:0.45px #1f1f1f;">Add Tag (3 items)</div>
<div class="t " style="left:400px;top:926.8px;font-size:14px;color:#1f1f1f;letter-spacing:-0.116px;-webkit-text-stroke:0.45px #1f1f1f;">Clone</div>
<div class="t " style="left:400px;top:966.8px;font-size:14px;color:#1f1f1f;letter-spacing:0.116px;-webkit-text-stroke:0.45px #1f1f1f;">Move to Project (3 items)</div>
<svg class="i" style="left:569.6px;top:890.4px;" width="6" height="9.6" viewBox="0 0 6 9.6"><path d="M0 0 L6 4.8 L0 9.6 Z" fill="#757575"/></svg>
<div class="b " style="left:410px;top:1006px;width:104px;height:26.5px;background:#4d66ff;border-radius:4px"></div>
<div class="t " style="left:418.5px;top:1009.0px;font-size:11px;color:#e8ebff;letter-spacing:0.293px;">Archive (3 items)</div>
<svg class="i" style="left:369.7px;top:525px;" width="16.8" height="13" viewBox="0 0 16.8 13"><rect x=".9" y=".9" width="15" height="11.2" rx="1.6" fill="none" stroke="#1f1f1f" stroke-width="1.8"/><path d="M3.4 2.6 V9.6 H13.6 V8.8 H4.2 V2.6 Z" fill="#1f1f1f"/><path d="M4.6 8.4 V5.6 L5.8 3.6 L7 6 L8.2 5 L9.4 7.2 L10.4 7.4 V8.4 Z" fill="#1f1f1f"/></svg>
<svg class="i" style="left:369.4px;top:563px;" width="17" height="17" viewBox="0 0 17 17"><path d="M0 5.4 L2.8 8.3 L0 11.2 Z M3.6 5.4 L6.4 8.3 L3.6 11.2 Z" fill="#a8a8a8"/><g transform="translate(7.2,0.2)"><path d="M1.6 .8 H8.2 a.8 .8 0 0 1 .8 .8 V4.2 L5.9 8.3 L9 12.4 V15 a.8 .8 0 0 1 -.8 .8 H1.6 a.8 .8 0 0 1 -.8 -.8 V12.4 L3.9 8.3 L.8 4.2 V1.6 a.8 .8 0 0 1 .8 -.8 Z" fill="none" stroke="#a8a8a8" stroke-width="1.6" stroke-linejoin="round"/><path d="M3.2 3.4 H6.6 L4.9 5.4 Z" fill="#a8a8a8"/><path d="M2.6 14.6 C3 12.8 6.8 12.8 7.2 14.6 Z" fill="#a8a8a8"/></g></svg>
<svg class="i" style="left:370px;top:605px;" width="16.4" height="14.2" viewBox="0 0 16.4 14.2"><g fill="#a8a8a8"><rect x="0" y="0" width="16.4" height="3.2" rx=".5"/><rect x="0" y="5" width="16.4" height="3.2" rx=".5"/><rect x="0" y="10" width="16.4" height="3.2" rx=".5"/><rect x="2.4" y="13.2" width="3.2" height=".9"/><rect x="10.8" y="13.2" width="3.2" height=".9"/></g><g fill="#fff"><rect x="1.4" y="1" width="2.2" height="1.2"/><rect x="4.8" y="1" width="2.2" height="1.2"/><rect x="9.2" y="1" width="5.6" height="1.2"/><rect x="1.4" y="6" width="2.2" height="1.2"/><rect x="4.8" y="6" width="2.2" height="1.2"/><rect x="9.2" y="6" width="5.6" height="1.2"/><rect x="1.4" y="11" width="2.2" height="1.2"/><rect x="4.8" y="11" width="2.2" height="1.2"/><rect x="9.2" y="11" width="5.6" height="1.2"/></g></svg>
<svg class="i" style="left:369.6px;top:645px;" width="17" height="17" viewBox="0 0 17 17"><g fill="none" stroke="#a8a8a8" stroke-width="1.9" stroke-linecap="round"><path d="M7.2 5.2 L9.6 2.8 a3.3 3.3 0 0 1 4.7 4.7 L11.9 9.9 a3.3 3.3 0 0 1 -4.6 .1"/><path d="M9.8 11.8 L7.4 14.2 a3.3 3.3 0 0 1 -4.7 -4.7 L5.1 7.1 a3.3 3.3 0 0 1 4.6 -.1"/></g></svg>
<svg class="i" style="left:369.7px;top:685.4px;" width="16.8" height="16.4" viewBox="0 0 16.8 16.4"><path d="M1.4 0 H15.4 a1.4 1.4 0 0 1 1.4 1.4 V3.2 H0 V1.4 a1.4 1.4 0 0 1 1.4 -1.4 Z" fill="#1f1f1f"/><path d="M1.2 4.5 H15.6 V14.6 a1.8 1.8 0 0 1 -1.8 1.8 H3 a1.8 1.8 0 0 1 -1.8 -1.8 Z" fill="#1f1f1f"/><rect x="5.4" y="7" width="6" height="2.2" rx=".8" fill="#fff"/></svg>
<svg class="i" style="left:370px;top:725.2px;" width="16.6" height="17" viewBox="0 0 16.6 17"><path d="M0 4.2 L4.8 8.5 L0 12.8 Z" fill="#1f1f1f"/><g transform="translate(6.6,0.2)"><path d="M1.6 .8 H8.2 a.8 .8 0 0 1 .8 .8 V4.2 L5.9 8.3 L9 12.4 V15 a.8 .8 0 0 1 -.8 .8 H1.6 a.8 .8 0 0 1 -.8 -.8 V12.4 L3.9 8.3 L.8 4.2 V1.6 a.8 .8 0 0 1 .8 -.8 Z" fill="none" stroke="#1f1f1f" stroke-width="1.6" stroke-linejoin="round"/><path d="M3.2 3.4 H6.6 L4.9 5.4 Z" fill="#1f1f1f"/><path d="M2.6 14.6 C3 12.8 6.8 12.8 7.2 14.6 Z" fill="#1f1f1f"/></g></svg>
<svg class="i" style="left:369.4px;top:766.6px;" width="15.8" height="13.8" viewBox="0 0 15.8 13.8"><path d="M3.6 6.9 A5.8 5.8 0 1 1 5.4 11.2" fill="none" stroke="#1f1f1f" stroke-width="1.6"/><path d="M0 5.6 H6.4 L3.2 9.2 Z" fill="#1f1f1f"/><path d="M9 3.8 V7.2 L11.2 9" fill="none" stroke="#1f1f1f" stroke-width="1.2"/></svg>
<svg class="i" style="left:372.2px;top:808px;" width="11.8" height="11.6" viewBox="0 0 11.8 11.6"><rect width="11.8" height="11.6" rx="1.6" fill="#a8a8a8"/></svg>
<svg class="i" style="left:369.4px;top:846.7px;" width="16.8" height="12.6" viewBox="0 0 16.8 12.6"><path d="M4.2 12.6 a4 4 0 0 1 -.7 -7.9 A5 5 0 0 1 13 3.6 a4.5 4.5 0 0 1 -.4 9 Z" fill="#1f1f1f"/><path d="M8.4 4.4 L12 8.2 H9.7 V12.6 H7.1 V8.2 H4.8 Z" fill="#fff"/></svg>
<svg class="i" style="left:369.7px;top:889.7px;" width="17" height="11.8" viewBox="0 0 17 11.8"><path d="M1.6 0 H11.6 a1.8 1.8 0 0 1 1.3 .6 L16.6 4.8 a1.6 1.6 0 0 1 0 2.2 L12.9 11.2 a1.8 1.8 0 0 1 -1.3 .6 H1.6 A1.6 1.6 0 0 1 0 10.2 V1.6 A1.6 1.6 0 0 1 1.6 0 Z" fill="#1f1f1f"/><circle cx="12.6" cy="5.9" r="1.5" fill="#fff"/></svg>
<svg class="i" style="left:369.7px;top:929.2px;" width="16.8" height="16.6" viewBox="0 0 16.8 16.6"><rect x="5.2" y="0" width="11.6" height="11.6" rx="1.6" fill="#1f1f1f"/><path d="M0 5.4 H2.4 V14.2 H11.4 V16.6 H1.6 A1.6 1.6 0 0 1 0 15 Z" fill="#1f1f1f"/></svg>
<svg class="i" style="left:369.7px;top:969.9px;" width="16.8" height="14.8" viewBox="0 0 16.8 14.8"><path d="M1.4 0 H6 L8 1.9 H15.4 a1.4 1.4 0 0 1 1.4 1.4 V13.4 a1.4 1.4 0 0 1 -1.4 1.4 H1.4 A1.4 1.4 0 0 1 0 13.4 V1.4 A1.4 1.4 0 0 1 1.4 0 Z" fill="#1f1f1f"/><path d="M0 6.6 H8.4 V4.2 L12.6 7.8 L8.4 11.4 V9 H0 Z" fill="#fff"/></svg>
<svg class="i" style="left:318.8px;top:1048.8px;" width="17.2" height="17" viewBox="0 0 17.2 17"><g fill="none" stroke="#dce0ee" stroke-width="1.7"><path d="M2.6 4.4 V10.2 a3 3 0 0 0 3 3 H7.6"/><path d="M14.6 12.6 V6.8 a3 3 0 0 0 -3 -3 H9.6"/><path d="M5.6 10.8 L8 13.2 L5.6 15.6" stroke-linejoin="round"/><path d="M11.6 1.4 L9.2 3.8 L11.6 6.2" stroke-linejoin="round"/></g><circle cx="2.6" cy="2.6" r="2.4" fill="#dce0ee"/><circle cx="14.6" cy="14.4" r="2.4" fill="#dce0ee"/></svg>
<svg class="i" style="left:454px;top:1049.5px;" width="16.8" height="16.4" viewBox="0 0 16.8 16.4"><path d="M1.4 0 H15.4 a1.4 1.4 0 0 1 1.4 1.4 V3.2 H0 V1.4 a1.4 1.4 0 0 1 1.4 -1.4 Z" fill="#dce0ee"/><path d="M1.2 4.5 H15.6 V14.6 a1.8 1.8 0 0 1 -1.8 1.8 H3 a1.8 1.8 0 0 1 -1.8 -1.8 Z" fill="#dce0ee"/><rect x="5.4" y="7" width="6" height="2.2" rx=".8" fill="#3a4058"/></svg>
<svg class="i" style="left:523.4px;top:1049.4px;" width="16.6" height="17" viewBox="0 0 16.6 17"><path d="M0 4.2 L4.8 8.5 L0 12.8 Z" fill="#dce0ee"/><g transform="translate(6.6,0.2)"><path d="M1.6 .8 H8.2 a.8 .8 0 0 1 .8 .8 V4.2 L5.9 8.3 L9 12.4 V15 a.8 .8 0 0 1 -.8 .8 H1.6 a.8 .8 0 0 1 -.8 -.8 V12.4 L3.9 8.3 L.8 4.2 V1.6 a.8 .8 0 0 1 .8 -.8 Z" fill="none" stroke="#dce0ee" stroke-width="1.6" stroke-linejoin="round"/><path d="M3.2 3.4 H6.6 L4.9 5.4 Z" fill="#dce0ee"/><path d="M2.6 14.6 C3 12.8 6.8 12.8 7.2 14.6 Z" fill="#dce0ee"/></g></svg>
<svg class="i" style="left:567px;top:1051px;" width="15.8" height="13.8" viewBox="0 0 15.8 13.8"><path d="M3.6 6.9 A5.8 5.8 0 1 1 5.4 11.2" fill="none" stroke="#dce0ee" stroke-width="1.6"/><path d="M0 5.6 H6.4 L3.2 9.2 Z" fill="#dce0ee"/><path d="M9 3.8 V7.2 L11.2 9" fill="none" stroke="#dce0ee" stroke-width="1.2"/></svg>
<svg class="i" style="left:613px;top:1052px;" width="11.8" height="11.6" viewBox="0 0 11.8 11.6"><rect width="11.8" height="11.6" rx="1.6" fill="#6a7090"/></svg>
<svg class="i" style="left:655px;top:1049.5px;" width="17" height="17" viewBox="0 0 17 17"><rect x=".9" y=".9" width="15.2" height="15.2" rx="2.6" fill="none" stroke="#6a7090" stroke-width="1.8"/><rect x="3.6" y="3.6" width="9.8" height="9.8" rx="1.4" fill="#6a7090"/><rect x="6.6" y="6.6" width="3.8" height="3.8" fill="#3a4058"/></svg>
<svg class="i" style="left:698.8px;top:1051.4px;" width="16.8" height="12.6" viewBox="0 0 16.8 12.6"><path d="M4.2 12.6 a4 4 0 0 1 -.7 -7.9 A5 5 0 0 1 13 3.6 a4.5 4.5 0 0 1 -.4 9 Z" fill="#dce0ee"/><path d="M8.4 4.4 L12 8.2 H9.7 V12.6 H7.1 V8.2 H4.8 Z" fill="#3a4058"/></svg>
<svg class="i" style="left:768px;top:1052px;" width="17" height="11.8" viewBox="0 0 17 11.8"><path d="M1.6 0 H11.6 a1.8 1.8 0 0 1 1.3 .6 L16.6 4.8 a1.6 1.6 0 0 1 0 2.2 L12.9 11.2 a1.8 1.8 0 0 1 -1.3 .6 H1.6 A1.6 1.6 0 0 1 0 10.2 V1.6 A1.6 1.6 0 0 1 1.6 0 Z" fill="#dce0ee"/><circle cx="12.6" cy="5.9" r="1.5" fill="#3a4058"/></svg>
<svg class="i" style="left:837.4px;top:1050.4px;" width="16.8" height="14.8" viewBox="0 0 16.8 14.8"><path d="M1.4 0 H6 L8 1.9 H15.4 a1.4 1.4 0 0 1 1.4 1.4 V13.4 a1.4 1.4 0 0 1 -1.4 1.4 H1.4 A1.4 1.4 0 0 1 0 13.4 V1.4 A1.4 1.4 0 0 1 1.4 0 Z" fill="#dce0ee"/><path d="M0 6.6 H8.4 V4.2 L12.6 7.8 L8.4 11.4 V9 H0 Z" fill="#3a4058"/></svg>
</body></html>
